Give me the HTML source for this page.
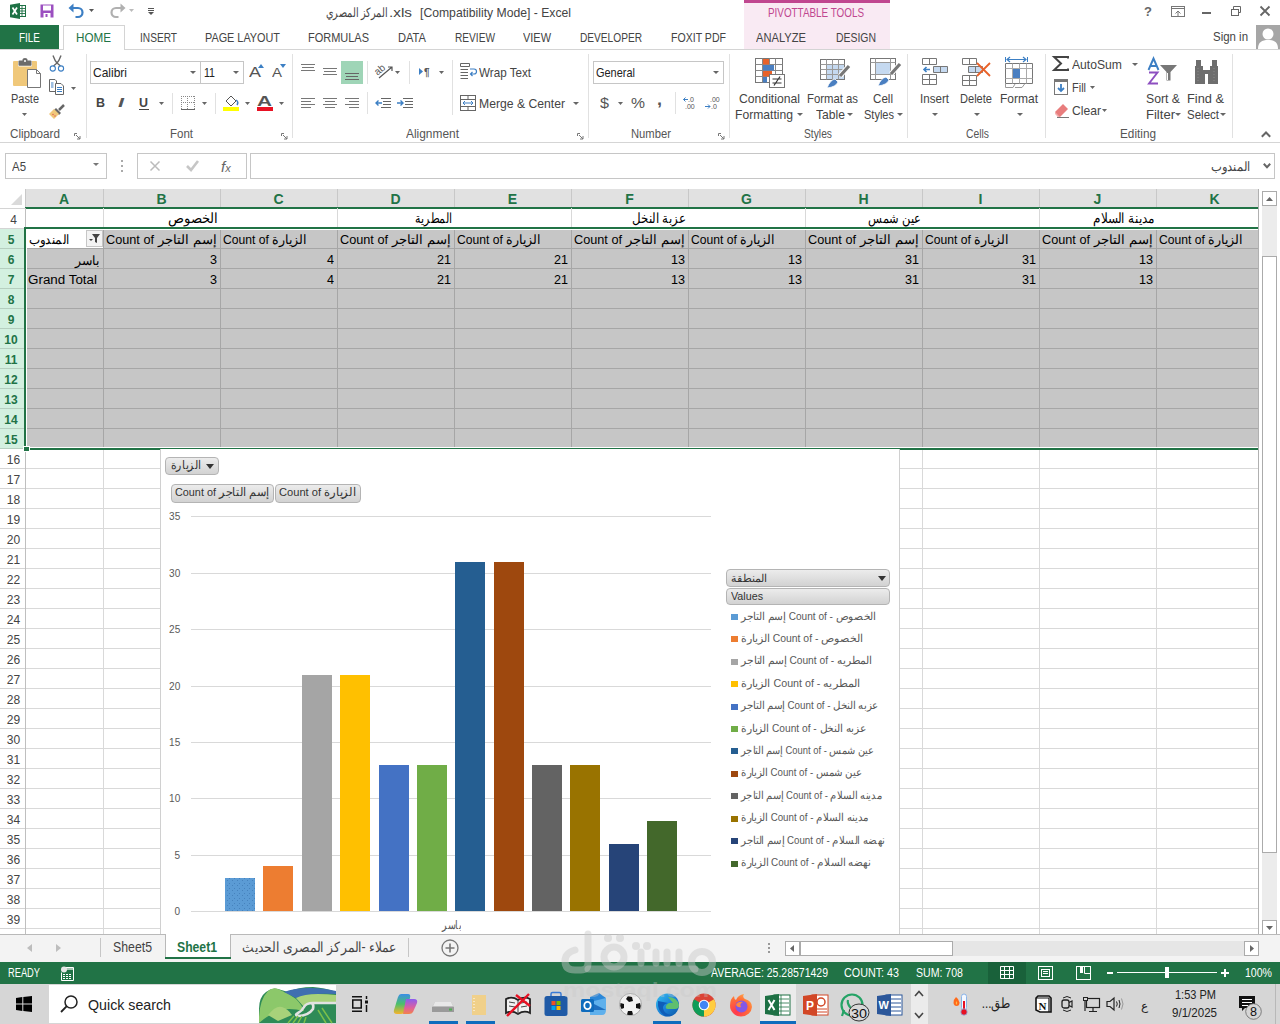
<!DOCTYPE html><html><head><meta charset="utf-8"><style>*{margin:0;padding:0;box-sizing:border-box}
html,body{width:1280px;height:1024px;overflow:hidden;background:#fff;font-family:"Liberation Sans",sans-serif;position:relative}
.t{position:absolute;white-space:nowrap;line-height:1}
svg{position:absolute;overflow:visible}
</style></head><body><div style="position:absolute;left:744px;top:0px;width:146px;height:49px;background:#f9eaf3"></div>
<div style="position:absolute;left:744px;top:0px;width:146px;height:3px;background:#c0468f"></div>
<div class="t" style="left:768px;transform-origin:left top;top:6.84px;font-size:12px;color:#c0468f;transform:scaleX(0.8225);">PIVOTTABLE TOOLS</div>
<div class="t" style="left:326px;transform-origin:left top;top:6.00px;font-size:13px;color:#444;transform:scaleX(0.7414);">المركز المصري</div>
<div class="t" style="left:389px;transform-origin:left top;top:6.00px;font-size:13px;color:#444;transform:scaleX(1.1795);">.xls</div>
<div class="t" style="left:420px;transform-origin:left top;top:6.00px;font-size:13px;color:#444;transform:scaleX(0.9372);">[Compatibility Mode] - Excel</div>
<svg style="left:10px;top:3px" width="17" height="17" viewBox="0 0 17 17"><rect x="8.5" y="2.5" width="7" height="11" fill="#fff" stroke="#1e7145"/><path d="M9 5.5H15M9 8H15M9 10.5H15M12 3V13" stroke="#1e7145" stroke-width="0.9"/><path d="M0 1.8L10 0V16L0 14.2Z" fill="#1e7145"/><path d="M2.5 4.5L7 11.5M7 4.5L2.5 11.5" stroke="#fff" stroke-width="1.7"/></svg>
<svg style="left:40px;top:4px" width="14" height="14" viewBox="0 0 14 14"><rect x="0.5" y="0.5" width="13" height="13" fill="#9b4fc0"/><rect x="3" y="1.5" width="8" height="5" fill="#fff"/><rect x="3.5" y="9" width="7" height="5" fill="#fff"/><rect x="5.5" y="10" width="2" height="3" fill="#9b4fc0"/></svg>
<svg style="left:68px;top:2px" width="18" height="17" viewBox="0 0 18 17"><path d="M3.5 6H10A4.5 4.5 0 0 1 10 15H7.5" fill="none" stroke="#3c7fc4" stroke-width="2.2"/><path d="M0.5 6L5.5 1.5V10.5Z" fill="#3c7fc4"/></svg>
<svg style="left:89px;top:9px" width="5" height="3" viewBox="0 0 5 3"><path d="M0 0H5L2.5 3Z" fill="#555"/></svg>
<svg style="left:108px;top:2px" width="18" height="17" viewBox="0 0 18 17"><path d="M14.5 6H8A4.5 4.5 0 0 0 8 15H10.5" fill="none" stroke="#b0b0b0" stroke-width="2.2"/><path d="M17.5 6L12.5 1.5V10.5Z" fill="#b0b0b0"/></svg>
<svg style="left:129px;top:9px" width="5" height="3" viewBox="0 0 5 3"><path d="M0 0H5L2.5 3Z" fill="#bbb"/></svg>
<svg style="left:148px;top:8px" width="6" height="7" viewBox="0 0 6 7"><path d="M0 0.5H6M0 2.5H6" stroke="#555" stroke-width="1"/><path d="M0 4H6L3 7Z" fill="#555"/></svg>
<div class="t" style="left:1144px;transform-origin:left top;top:5.00px;font-size:13px;color:#666;font-weight:bold">?</div>
<svg style="left:1171px;top:6px" width="14" height="11" viewBox="0 0 14 11"><rect x="0.5" y="0.5" width="13" height="10" fill="none" stroke="#777"/><path d="M0.5 2.5H13.5" stroke="#777"/><path d="M7 10V5M4.5 7.5L7 5L9.5 7.5" fill="none" stroke="#777"/></svg>
<div style="position:absolute;left:1202px;top:12px;width:9px;height:2px;background:#666"></div>
<svg style="left:1231px;top:6px" width="10" height="10" viewBox="0 0 10 10"><rect x="0.5" y="3.5" width="7" height="6" fill="none" stroke="#666"/><path d="M2.5 3.5V0.5H9.5V6.5H7.5" fill="none" stroke="#666"/></svg>
<svg style="left:1260px;top:6px" width="10" height="10" viewBox="0 0 10 10"><path d="M0.5 0.5L9.5 9.5M9.5 0.5L0.5 9.5" stroke="#666" stroke-width="1.8"/></svg>
<div style="position:absolute;left:0px;top:25px;width:59px;height:25px;background:#217346"></div>
<div class="t" style="left:19px;transform-origin:left top;top:31.00px;font-size:13px;color:#fff;transform:scaleX(0.7645);">FILE</div>
<div style="position:absolute;left:0px;top:49px;width:1280px;height:1px;background:#d4d4d4"></div>
<div style="position:absolute;left:63px;top:25px;width:62px;height:25px;background:#fff;border:1px solid #d4d4d4;border-bottom:none"></div>
<div class="t" style="left:76px;transform-origin:left top;top:31.00px;font-size:13px;color:#217346;transform:scaleX(0.8974);">HOME</div>
<div class="t" style="left:140px;transform-origin:left top;top:31.00px;font-size:13px;color:#444;transform:scaleX(0.7800);">INSERT</div>
<div class="t" style="left:205px;transform-origin:left top;top:31.00px;font-size:13px;color:#444;transform:scaleX(0.8349);">PAGE LAYOUT</div>
<div class="t" style="left:308px;transform-origin:left top;top:31.00px;font-size:13px;color:#444;transform:scaleX(0.8445);">FORMULAS</div>
<div class="t" style="left:398px;transform-origin:left top;top:31.00px;font-size:13px;color:#444;transform:scaleX(0.8550);">DATA</div>
<div class="t" style="left:455px;transform-origin:left top;top:31.00px;font-size:13px;color:#444;transform:scaleX(0.7798);">REVIEW</div>
<div class="t" style="left:523px;transform-origin:left top;top:31.00px;font-size:13px;color:#444;transform:scaleX(0.8425);">VIEW</div>
<div class="t" style="left:580px;transform-origin:left top;top:31.00px;font-size:13px;color:#444;transform:scaleX(0.7800);">DEVELOPER</div>
<div class="t" style="left:671px;transform-origin:left top;top:31.00px;font-size:13px;color:#444;transform:scaleX(0.8129);">FOXIT PDF</div>
<div class="t" style="left:756px;transform-origin:left top;top:31.00px;font-size:13px;color:#444;transform:scaleX(0.8579);">ANALYZE</div>
<div class="t" style="left:836px;transform-origin:left top;top:31.00px;font-size:13px;color:#444;transform:scaleX(0.8025);">DESIGN</div>
<div class="t" style="left:1213px;transform-origin:left top;top:30.00px;font-size:13px;color:#444;transform:scaleX(0.8805);">Sign in</div>
<svg style="left:1256px;top:25px" width="24" height="24" viewBox="0 0 24 24"><rect width="24" height="24" fill="#a6a6a6"/><circle cx="12" cy="9" r="5.5" fill="#fff"/><path d="M2 24C2 17 6 15 12 15S22 17 22 24Z" fill="#fff"/></svg>
<div style="position:absolute;left:0px;top:142px;width:1280px;height:1px;background:#d5d5d5"></div>
<div style="position:absolute;left:86px;top:54px;width:1px;height:84px;background:#e1e1e1"></div>
<div style="position:absolute;left:292px;top:54px;width:1px;height:84px;background:#e1e1e1"></div>
<div style="position:absolute;left:588px;top:54px;width:1px;height:84px;background:#e1e1e1"></div>
<div style="position:absolute;left:729px;top:54px;width:1px;height:84px;background:#e1e1e1"></div>
<div style="position:absolute;left:907px;top:54px;width:1px;height:84px;background:#e1e1e1"></div>
<div style="position:absolute;left:1045px;top:54px;width:1px;height:84px;background:#e1e1e1"></div>
<div style="position:absolute;left:1232px;top:54px;width:1px;height:84px;background:#e1e1e1"></div>
<div class="t" style="left:10px;transform-origin:left top;top:127.84px;font-size:12px;color:#555;transform:scaleX(0.9732);">Clipboard</div>
<div class="t" style="left:170px;transform-origin:left top;top:127.84px;font-size:12px;color:#555;transform:scaleX(0.9577);">Font</div>
<div class="t" style="left:406px;transform-origin:left top;top:127.84px;font-size:12px;color:#555;transform:scaleX(0.9930);">Alignment</div>
<div class="t" style="left:631px;transform-origin:left top;top:127.84px;font-size:12px;color:#555;transform:scaleX(0.9370);">Number</div>
<div class="t" style="left:804px;transform-origin:left top;top:127.84px;font-size:12px;color:#555;transform:scaleX(0.8566);">Styles</div>
<div class="t" style="left:966px;transform-origin:left top;top:127.84px;font-size:12px;color:#555;transform:scaleX(0.8623);">Cells</div>
<div class="t" style="left:1120px;transform-origin:left top;top:127.84px;font-size:12px;color:#555;transform:scaleX(0.9808);">Editing</div>
<svg style="left:74px;top:133px" width="7" height="7" viewBox="0 0 7 7"><path d="M0.5 0.5H6.5V6.5H0.5Z" fill="none" stroke="#999" stroke-width="0"/><path d="M0.5 0.5V3M0.5 0.5H3M2 2L6 6M6 3V6H3" fill="none" stroke="#777"/></svg>
<svg style="left:281px;top:133px" width="7" height="7" viewBox="0 0 7 7"><path d="M0.5 0.5H6.5V6.5H0.5Z" fill="none" stroke="#999" stroke-width="0"/><path d="M0.5 0.5V3M0.5 0.5H3M2 2L6 6M6 3V6H3" fill="none" stroke="#777"/></svg>
<svg style="left:577px;top:133px" width="7" height="7" viewBox="0 0 7 7"><path d="M0.5 0.5H6.5V6.5H0.5Z" fill="none" stroke="#999" stroke-width="0"/><path d="M0.5 0.5V3M0.5 0.5H3M2 2L6 6M6 3V6H3" fill="none" stroke="#777"/></svg>
<svg style="left:718px;top:133px" width="7" height="7" viewBox="0 0 7 7"><path d="M0.5 0.5H6.5V6.5H0.5Z" fill="none" stroke="#999" stroke-width="0"/><path d="M0.5 0.5V3M0.5 0.5H3M2 2L6 6M6 3V6H3" fill="none" stroke="#777"/></svg>
<svg style="left:12px;top:56px" width="30" height="33" viewBox="0 0 30 33"><rect x="1" y="5" width="24" height="25" rx="1" fill="#f0c87a"/><path d="M6.5 5.5H19.5V10H6.5Z" fill="#6b6b6b" stroke="#fff" stroke-width="1"/><path d="M6.5 9.5H19.5V5.5Q19.5 4.5 18.5 4.5H15.5V3.5Q15.5 2 13 2Q10.5 2 10.5 3.5V4.5H7.5Q6.5 4.5 6.5 5.5Z" fill="#6b6b6b"/><circle cx="13" cy="5" r="1" fill="#fff"/><path d="M15.5 13.5H24.5L28.5 17.5V31.5H15.5Z" fill="#fff" stroke="#777"/><path d="M24.5 13.5V17.5H28.5" fill="none" stroke="#777"/></svg>
<div class="t" style="left:11px;transform-origin:left top;top:92.84px;font-size:12px;color:#444;transform:scaleX(0.9124);">Paste</div>
<svg style="left:22px;top:113px" width="5" height="3" viewBox="0 0 5 3"><path d="M0 0H5L2.5 3Z" fill="#666"/></svg>
<svg style="left:49px;top:55px" width="16" height="17" viewBox="0 0 16 17"><path d="M4 0.5Q6 6 8 8Q10 6 12 0.5M8 8L4.5 11M8 8L11.5 11" fill="none" stroke="#666" stroke-width="1.4"/><circle cx="3.8" cy="13.5" r="2.6" fill="none" stroke="#3c7fc4" stroke-width="1.1"/><circle cx="12" cy="13.5" r="2.6" fill="none" stroke="#3c7fc4" stroke-width="1.1"/></svg>
<svg style="left:48px;top:79px" width="16" height="16" viewBox="0 0 16 16"><path d="M1.5 0.5H7L8.5 2V12.5H1.5Z" fill="#fff" stroke="#666"/><path d="M3 4H5.5M3 6H5.5M3 8H5.5" stroke="#3c7fc4"/><path d="M7.5 4.5H13L15.5 7V15.5H7.5Z" fill="#fff" stroke="#666"/><path d="M9 8.5H14M9 10.5H14M9 12.5H14" stroke="#3c7fc4"/></svg>
<svg style="left:71px;top:87px" width="5" height="3" viewBox="0 0 5 3"><path d="M0 0H5L2.5 3Z" fill="#666"/></svg>
<svg style="left:49px;top:102px" width="17" height="18" viewBox="0 0 17 18"><path d="M10 8L15 3" stroke="#666" stroke-width="2.5"/><path d="M7 6L12 11L10 13L5 8Z" fill="#666"/><path d="M0 12L5 7L10 12L5 17Z" fill="#f0c87a"/><circle cx="4" cy="12.5" r="0.7" fill="#e05050"/><circle cx="6" cy="14" r="0.7" fill="#e05050"/></svg>
<div style="position:absolute;left:90px;top:61px;width:111px;height:23px;border:1px solid #c6c6c6;background:#fff"></div>
<div style="position:absolute;left:201px;top:61px;width:43px;height:23px;border:1px solid #c6c6c6;border-left:none;background:#fff"></div>
<div class="t" style="left:93px;transform-origin:left top;top:66.00px;font-size:13px;color:#222;transform:scaleX(0.9228);">Calibri</div>
<svg style="left:190px;top:71px" width="6" height="3" viewBox="0 0 6 3"><path d="M0 0H6L3.0 3Z" fill="#666"/></svg>
<svg style="left:233px;top:71px" width="6" height="3" viewBox="0 0 6 3"><path d="M0 0H6L3.0 3Z" fill="#666"/></svg>
<div class="t" style="left:204px;transform-origin:left top;top:66.00px;font-size:13px;color:#222;transform:scaleX(0.8148);">11</div>
<div class="t" style="left:249px;transform-origin:left top;top:64.30px;font-size:15px;color:#555;transform:scaleX(1.1981);">A</div>
<svg style="left:258px;top:64px" width="6" height="4" viewBox="0 0 6 4"><path d="M0 4L3 0L6 4Z" fill="#3c7fc4"/></svg>
<div class="t" style="left:272px;transform-origin:left top;top:66.84px;font-size:12px;color:#555;transform:scaleX(1.2476);">A</div>
<svg style="left:280px;top:64px" width="6" height="4" viewBox="0 0 6 4"><path d="M0 0L3 4L6 0Z" fill="#3c7fc4"/></svg>
<div class="t" style="left:96px;transform-origin:left top;top:96.84px;font-size:12px;color:#444;transform:scaleX(1.0378);font-weight:bold">B</div>
<div class="t" style="left:118px;transform-origin:left top;top:96.00px;font-size:13px;color:#555;transform:scaleX(1.6552);font-style:italic;font-weight:bold">I</div>
<div class="t" style="left:139px;transform-origin:left top;top:96.84px;font-size:12px;color:#444;transform:scaleX(1.0378);font-weight:bold">U</div>
<div style="position:absolute;left:139px;top:109px;width:10px;height:1px;background:#444"></div>
<svg style="left:159px;top:102px" width="5" height="3" viewBox="0 0 5 3"><path d="M0 0H5L2.5 3Z" fill="#666"/></svg>
<div style="position:absolute;left:172px;top:93px;width:1px;height:21px;background:#e1e1e1"></div>
<svg style="left:181px;top:96px" width="14" height="14" viewBox="0 0 14 14"><path d="M0.5 0V13M13.5 0V13M0 0.5H14M6.5 0V13M0 6.5H14" stroke="#888" stroke-dasharray="1 1"/><path d="M0 13.5H14" stroke="#666"/></svg>
<svg style="left:202px;top:102px" width="5" height="3" viewBox="0 0 5 3"><path d="M0 0H5L2.5 3Z" fill="#666"/></svg>
<div style="position:absolute;left:215px;top:93px;width:1px;height:21px;background:#e1e1e1"></div>
<svg style="left:223px;top:95px" width="17" height="17" viewBox="0 0 17 17"><path d="M3 6L8 1L13 6L8 11Z" fill="#fff" stroke="#555"/><path d="M13 5Q16 7 14 10" fill="none" stroke="#3c7fc4" stroke-width="1.5"/><rect x="0" y="12" width="16" height="4" fill="#ffff00"/></svg>
<svg style="left:245px;top:102px" width="5" height="3" viewBox="0 0 5 3"><path d="M0 0H5L2.5 3Z" fill="#666"/></svg>
<div class="t" style="left:257px;transform-origin:left top;top:93.30px;font-size:15px;color:#555;transform:scaleX(1.3833);font-weight:bold">A</div>
<div style="position:absolute;left:257px;top:107px;width:16px;height:4px;background:#e81123"></div>
<svg style="left:279px;top:102px" width="5" height="3" viewBox="0 0 5 3"><path d="M0 0H5L2.5 3Z" fill="#666"/></svg>
<div style="position:absolute;left:301px;top:64px;width:14px;height:1px;background:#777"></div>
<div style="position:absolute;left:302px;top:67px;width:12px;height:1px;background:#777"></div>
<div style="position:absolute;left:301px;top:70px;width:14px;height:1px;background:#777"></div>
<div style="position:absolute;left:323px;top:68px;width:14px;height:1px;background:#777"></div>
<div style="position:absolute;left:324px;top:71px;width:12px;height:1px;background:#777"></div>
<div style="position:absolute;left:323px;top:74px;width:14px;height:1px;background:#777"></div>
<div style="position:absolute;left:341px;top:61px;width:22px;height:23px;background:#9fd5b7"></div>
<div style="position:absolute;left:345px;top:73px;width:14px;height:1px;background:#666"></div>
<div style="position:absolute;left:346px;top:76px;width:12px;height:1px;background:#666"></div>
<div style="position:absolute;left:345px;top:79px;width:14px;height:1px;background:#666"></div>
<div style="position:absolute;left:367px;top:61px;width:1px;height:23px;background:#e1e1e1"></div>
<svg style="left:375px;top:63px" width="26" height="17" viewBox="0 0 26 17"><text x="0" y="10" font-size="10" fill="#555" transform="rotate(-40 5 8)" font-family="Liberation Sans">ab</text><path d="M4 15L17 4M13 4H17V8" fill="none" stroke="#555" stroke-width="1.2"/></svg>
<svg style="left:395px;top:71px" width="5" height="3" viewBox="0 0 5 3"><path d="M0 0H5L2.5 3Z" fill="#666"/></svg>
<div style="position:absolute;left:409px;top:61px;width:1px;height:23px;background:#e1e1e1"></div>
<svg style="left:419px;top:67px" width="14" height="9" viewBox="0 0 14 9"><path d="M0 1L4 4.5L0 8Z" fill="#3c7fc4"/><text x="5" y="8.5" font-size="10" fill="#555" font-family="Liberation Sans" font-weight="bold">¶</text></svg>
<svg style="left:439px;top:71px" width="5" height="3" viewBox="0 0 5 3"><path d="M0 0H5L2.5 3Z" fill="#666"/></svg>
<div style="position:absolute;left:301px;top:98px;width:14px;height:1px;background:#777"></div>
<div style="position:absolute;left:301px;top:101px;width:10px;height:1px;background:#777"></div>
<div style="position:absolute;left:301px;top:104px;width:14px;height:1px;background:#777"></div>
<div style="position:absolute;left:301px;top:107px;width:10px;height:1px;background:#777"></div>
<div style="position:absolute;left:323px;top:98px;width:14px;height:1px;background:#777"></div>
<div style="position:absolute;left:325px;top:101px;width:10px;height:1px;background:#777"></div>
<div style="position:absolute;left:323px;top:104px;width:14px;height:1px;background:#777"></div>
<div style="position:absolute;left:325px;top:107px;width:10px;height:1px;background:#777"></div>
<div style="position:absolute;left:345px;top:98px;width:14px;height:1px;background:#777"></div>
<div style="position:absolute;left:349px;top:101px;width:10px;height:1px;background:#777"></div>
<div style="position:absolute;left:345px;top:104px;width:14px;height:1px;background:#777"></div>
<div style="position:absolute;left:349px;top:107px;width:10px;height:1px;background:#777"></div>
<div style="position:absolute;left:367px;top:92px;width:1px;height:22px;background:#e1e1e1"></div>
<svg style="left:375px;top:98px" width="17" height="11" viewBox="0 0 17 11"><path d="M6 0.5H16M8 3.5H16M8 6.5H16M6 9.5H16" stroke="#666"/><path d="M1 5H7M3.5 2.5L1 5L3.5 7.5" fill="none" stroke="#3c7fc4" stroke-width="1.4"/></svg>
<svg style="left:397px;top:98px" width="17" height="11" viewBox="0 0 17 11"><path d="M6 0.5H16M8 3.5H16M8 6.5H16M6 9.5H16" stroke="#666"/><path d="M0 5H6M3.5 2.5L6 5L3.5 7.5" fill="none" stroke="#3c7fc4" stroke-width="1.4"/></svg>
<div style="position:absolute;left:452px;top:60px;width:1px;height:55px;background:#e1e1e1"></div>
<svg style="left:460px;top:63px" width="17" height="16" viewBox="0 0 17 16"><path d="M0.5 0.5H9.5V3.5H0.5Z" fill="none" stroke="#666"/><path d="M0.5 6.5H8M0.5 9.5H8M0.5 12.5H8" stroke="#666"/><path d="M0.5 15.5H8" stroke="#666"/><path d="M10 6H14A2.5 2.5 0 0 1 14 11H11M12.5 9L10.5 11L12.5 13" fill="none" stroke="#3c7fc4" stroke-width="1.2"/></svg>
<div class="t" style="left:479px;transform-origin:left top;top:66.00px;font-size:13px;color:#444;transform:scaleX(0.8958);">Wrap Text</div>
<svg style="left:460px;top:95px" width="16" height="16" viewBox="0 0 16 16"><rect x="0.5" y="0.5" width="15" height="15" fill="#fff" stroke="#666"/><path d="M0.5 4.5H15.5M0.5 11.5H15.5M8 0.5V4.5M8 11.5V15.5" stroke="#666"/><path d="M3 8H13M5 6L3 8L5 10M11 6L13 8L11 10" fill="none" stroke="#3c7fc4"/></svg>
<div class="t" style="left:479px;transform-origin:left top;top:97.00px;font-size:13px;color:#444;transform:scaleX(0.9372);">Merge &amp; Center</div>
<svg style="left:573px;top:102px" width="6" height="3" viewBox="0 0 6 3"><path d="M0 0H6L3.0 3Z" fill="#666"/></svg>
<div style="position:absolute;left:593px;top:61px;width:131px;height:23px;border:1px solid #c6c6c6;background:#fff"></div>
<div class="t" style="left:596px;transform-origin:left top;top:66.00px;font-size:13px;color:#222;transform:scaleX(0.8432);">General</div>
<svg style="left:713px;top:71px" width="6" height="3" viewBox="0 0 6 3"><path d="M0 0H6L3.0 3Z" fill="#666"/></svg>
<div class="t" style="left:600px;transform-origin:left top;top:95.30px;font-size:15px;color:#555;transform:scaleX(1.0787);">$</div>
<svg style="left:618px;top:102px" width="5" height="3" viewBox="0 0 5 3"><path d="M0 0H5L2.5 3Z" fill="#666"/></svg>
<div class="t" style="left:631px;transform-origin:left top;top:95.30px;font-size:15px;color:#555;transform:scaleX(1.0492);">%</div>
<div class="t" style="left:657px;transform-origin:left top;top:92.46px;font-size:16px;color:#555;transform:scaleX(1.1228);font-weight:bold">,</div>
<div style="position:absolute;left:675px;top:92px;width:1px;height:22px;background:#e1e1e1"></div>
<svg style="left:683px;top:96px" width="15" height="13" viewBox="0 0 15 13"><text x="5" y="6" font-size="7" fill="#555" font-family="Liberation Sans">.0</text><text x="2" y="13" font-size="7" fill="#555" font-family="Liberation Sans">.00</text><path d="M0.5 3.5H5M2.5 1.5L0.5 3.5L2.5 5.5" fill="none" stroke="#3c7fc4"/></svg>
<svg style="left:705px;top:96px" width="15" height="13" viewBox="0 0 15 13"><text x="5" y="6" font-size="7" fill="#555" font-family="Liberation Sans">.00</text><text x="6" y="13" font-size="7" fill="#555" font-family="Liberation Sans">.0</text><path d="M0 10.5H5M3 8.5L5 10.5L3 12.5" fill="none" stroke="#3c7fc4"/></svg>
<svg style="left:755px;top:57px" width="31" height="32" viewBox="0 0 31 32"><rect x="0.5" y="1.5" width="27" height="24" fill="#fff" stroke="#777"/><path d="M0.5 7.5H27.5M0.5 13.5H27.5M0.5 19.5H27.5M7.5 1.5V25.5M20.5 1.5V25.5M14.5 1.5V7.5M14.5 13.5V19.5" stroke="#888"/><rect x="8" y="2" width="6" height="5.5" fill="#e8622a"/><rect x="8" y="8" width="11" height="5.5" fill="#4a7fc1"/><rect x="8" y="14" width="9" height="5.5" fill="#e8622a"/><rect x="8" y="20" width="4" height="5.5" fill="#4a7fc1"/><rect x="14.5" y="17.5" width="15" height="13" fill="#fff" stroke="#777"/><path d="M17.5 22H26.5M17.5 26H26.5M25 19.5L19 28.5" stroke="#333" stroke-width="1.2"/></svg>
<div class="t" style="left:739px;transform-origin:left top;top:92.00px;font-size:13px;color:#444;transform:scaleX(0.9378);">Conditional</div>
<div class="t" style="left:735px;transform-origin:left top;top:108.00px;font-size:13px;color:#444;transform:scaleX(0.9334);">Formatting</div>
<svg style="left:797px;top:113px" width="6" height="3" viewBox="0 0 6 3"><path d="M0 0H6L3.0 3Z" fill="#666"/></svg>
<svg style="left:820px;top:59px" width="30" height="30" viewBox="0 0 30 30"><rect x="0.5" y="0.5" width="24" height="20" fill="#fff" stroke="#777"/><rect x="6" y="5" width="18" height="15" fill="#c5d9f0"/><path d="M0.5 5.5H24.5M0.5 10.5H24.5M0.5 15.5H24.5M6.5 0.5V20.5M12.5 0.5V20.5M18.5 0.5V20.5" stroke="#999"/><path d="M29 7L20 17" stroke="#fff" stroke-width="5"/><path d="M29 7L20 17" stroke="#777" stroke-width="3.2"/><path d="M7 29Q10 21 15 20L18 23Q16 28 7 29Z" fill="#4a7fc1" stroke="#fff" stroke-width="0.8"/></svg>
<div class="t" style="left:807px;transform-origin:left top;top:92.00px;font-size:13px;color:#444;transform:scaleX(0.8716);">Format as</div>
<div class="t" style="left:816px;transform-origin:left top;top:108.00px;font-size:13px;color:#444;transform:scaleX(0.9331);">Table</div>
<svg style="left:847px;top:113px" width="6" height="3" viewBox="0 0 6 3"><path d="M0 0H6L3.0 3Z" fill="#666"/></svg>
<svg style="left:870px;top:58px" width="31" height="31" viewBox="0 0 31 31"><rect x="0.5" y="0.5" width="25" height="21" fill="#fff" stroke="#777"/><rect x="6" y="5" width="14" height="11" fill="#c5d9f0"/><path d="M0.5 4.5H25.5M0.5 16.5H25.5M5.5 0.5V21.5M20.5 0.5V21.5" stroke="#999"/><path d="M30 6L21 16" stroke="#fff" stroke-width="5"/><path d="M30 6L21 16" stroke="#777" stroke-width="3.2"/><path d="M8 28Q11 20 16 19L19 22Q17 27 8 28Z" fill="#4a7fc1" stroke="#fff" stroke-width="0.8"/></svg>
<div class="t" style="left:873px;transform-origin:left top;top:92.00px;font-size:13px;color:#444;transform:scaleX(0.8926);">Cell</div>
<div class="t" style="left:864px;transform-origin:left top;top:108.00px;font-size:13px;color:#444;transform:scaleX(0.8473);">Styles</div>
<svg style="left:897px;top:113px" width="6" height="3" viewBox="0 0 6 3"><path d="M0 0H6L3.0 3Z" fill="#666"/></svg>
<svg style="left:922px;top:57px" width="27" height="30" viewBox="0 0 27 30"><path d="M0.5 1.5H14.5V7.5H0.5ZM7.5 1.5V7.5" fill="#fff" stroke="#777"/><path d="M11.5 9.5H25.5V15.5H11.5Z" fill="#c5d9f0" stroke="#777"/><path d="M18.5 9.5V15.5" stroke="#777"/><path d="M2 12.5H8M4.5 10L2 12.5L4.5 15" fill="none" stroke="#3c7fc4" stroke-width="1.6"/><path d="M0.5 17.5H14.5V27.5H0.5ZM0.5 22.5H14.5M7.5 17.5V27.5" fill="#fff" stroke="#777"/></svg>
<div class="t" style="left:920px;transform-origin:left top;top:92.00px;font-size:13px;color:#444;transform:scaleX(0.8919);">Insert</div>
<svg style="left:932px;top:113px" width="6" height="3" viewBox="0 0 6 3"><path d="M0 0H6L3.0 3Z" fill="#666"/></svg>
<svg style="left:962px;top:57px" width="32" height="30" viewBox="0 0 32 30"><path d="M0.5 1.5H14.5V7.5H0.5ZM7.5 1.5V7.5" fill="#fff" stroke="#777"/><path d="M6.5 9.5H20.5V15.5H6.5Z" fill="#c5d9f0" stroke="#777"/><path d="M13.5 9.5V15.5" stroke="#777"/><path d="M0.5 18.5H14.5V28.5H0.5ZM0.5 23.5H14.5M7.5 18.5V28.5" fill="#fff" stroke="#777"/><path d="M15 6L28 19M28 6L15 19" stroke="#e8622a" stroke-width="1.8"/></svg>
<div class="t" style="left:960px;transform-origin:left top;top:92.00px;font-size:13px;color:#444;transform:scaleX(0.8516);">Delete</div>
<svg style="left:974px;top:113px" width="6" height="3" viewBox="0 0 6 3"><path d="M0 0H6L3.0 3Z" fill="#666"/></svg>
<svg style="left:1005px;top:57px" width="29" height="32" viewBox="0 0 29 32"><path d="M0.5 0V5M22.5 0V5" stroke="#3c7fc4"/><path d="M2 2.5H21M5 0L2 2.5L5 5M18 0L21 2.5L18 5" fill="none" stroke="#3c7fc4" stroke-width="1.2"/><path d="M0.5 6.5H27.5V26.5H0.5Z" fill="#fff" stroke="#777"/><path d="M0.5 11.5H27.5M0.5 21.5H27.5M7.5 6.5V26.5M14.5 6.5V26.5M21.5 6.5V26.5" stroke="#aaa"/><rect x="8" y="12" width="7" height="9" fill="#4a7fc1"/><path d="M0.5 26.5V30.5H8L10 27M10 30.5H17L20 26.5" fill="none" stroke="#999"/></svg>
<div class="t" style="left:1000px;transform-origin:left top;top:92.00px;font-size:13px;color:#444;transform:scaleX(0.9230);">Format</div>
<svg style="left:1017px;top:113px" width="6" height="3" viewBox="0 0 6 3"><path d="M0 0H6L3.0 3Z" fill="#666"/></svg>
<svg style="left:1053px;top:56px" width="16" height="16" viewBox="0 0 16 16"><path d="M15 2.5V1H1.2L8 7.5L1.2 14H15V12.5" fill="none" stroke="#444" stroke-width="2" stroke-linejoin="miter"/></svg>
<div class="t" style="left:1072px;transform-origin:left top;top:58.00px;font-size:13px;color:#444;transform:scaleX(0.9349);">AutoSum</div>
<svg style="left:1132px;top:63px" width="6" height="3" viewBox="0 0 6 3"><path d="M0 0H6L3.0 3Z" fill="#666"/></svg>
<svg style="left:1054px;top:79px" width="15" height="16" viewBox="0 0 15 16"><rect x="0.5" y="0.5" width="13" height="15" fill="#fff" stroke="#777"/><rect x="0" y="0" width="14" height="3" fill="#777"/><path d="M7 5V12M4 9L7 12L10 9" fill="none" stroke="#3c7fc4" stroke-width="1.8"/></svg>
<div class="t" style="left:1072px;transform-origin:left top;top:81.00px;font-size:13px;color:#444;transform:scaleX(0.8429);">Fill</div>
<svg style="left:1090px;top:86px" width="5" height="3" viewBox="0 0 5 3"><path d="M0 0H5L2.5 3Z" fill="#666"/></svg>
<svg style="left:1054px;top:102px" width="16" height="16" viewBox="0 0 16 16"><path d="M1 10L9 2L14 7L6 15H4Z" fill="#e87d7d"/><path d="M1 10L4 13L6 15H4L1 12Z" fill="#f3b0b0"/><path d="M3 15.5H15" stroke="#777"/></svg>
<div class="t" style="left:1072px;transform-origin:left top;top:104.00px;font-size:13px;color:#444;transform:scaleX(0.9331);">Clear</div>
<svg style="left:1102px;top:109px" width="5" height="3" viewBox="0 0 5 3"><path d="M0 0H5L2.5 3Z" fill="#666"/></svg>
<svg style="left:1148px;top:58px" width="30" height="28" viewBox="0 0 30 28"><path d="M0.5 12L5.5 0.5L10.5 12M2.5 8H8.5" fill="none" stroke="#3c7fc4" stroke-width="1.9"/><path d="M1 14.5H9.5L1 25.5H10" fill="none" stroke="#8d4fc0" stroke-width="1.9"/><path d="M12 7H29L22.5 14V22.5H18.5V14Z" fill="#777"/><path d="M19.5 15V22" stroke="#fff" stroke-width="1"/></svg>
<div class="t" style="left:1146px;transform-origin:left top;top:92.00px;font-size:13px;color:#444;transform:scaleX(0.9412);">Sort &amp;</div>
<div class="t" style="left:1146px;transform-origin:left top;top:108.00px;font-size:13px;color:#444;transform:scaleX(1.0038);">Filter</div>
<svg style="left:1175px;top:113px" width="6" height="3" viewBox="0 0 6 3"><path d="M0 0H6L3.0 3Z" fill="#666"/></svg>
<svg style="left:1193px;top:60px" width="27" height="24" viewBox="0 0 27 24"><path d="M3 0H8V6H10V10H17V6H19V0H24V6H25V24H15V14H12V24H2V6H3Z" fill="#6e6e6e"/><path d="M5 8V22M21 8V22" stroke="#8a8a8a" stroke-width="1" stroke-dasharray="1 2"/></svg>
<div class="t" style="left:1187px;transform-origin:left top;top:92.00px;font-size:13px;color:#444;transform:scaleX(0.9846);">Find &amp;</div>
<div class="t" style="left:1187px;transform-origin:left top;top:108.00px;font-size:13px;color:#444;transform:scaleX(0.8854);">Select</div>
<svg style="left:1220px;top:113px" width="6" height="3" viewBox="0 0 6 3"><path d="M0 0H6L3.0 3Z" fill="#666"/></svg>
<svg style="left:1261px;top:131px" width="10" height="7" viewBox="0 0 10 7"><path d="M0.8 5.8L5 1.5L9.2 5.8" fill="none" stroke="#666" stroke-width="2"/></svg>
<div style="position:absolute;left:5px;top:153px;width:102px;height:26px;border:1px solid #c6c6c6;background:#fff"></div>
<div class="t" style="left:12px;transform-origin:left top;top:160.00px;font-size:13px;color:#444;transform:scaleX(0.8802);">A5</div>
<svg style="left:93px;top:163px" width="6" height="3" viewBox="0 0 6 3"><path d="M0 0H6L3.0 3Z" fill="#777"/></svg>
<div style="position:absolute;left:121px;top:160px;width:2px;height:2px;background:#aaa"></div>
<div style="position:absolute;left:121px;top:165px;width:2px;height:2px;background:#aaa"></div>
<div style="position:absolute;left:121px;top:170px;width:2px;height:2px;background:#aaa"></div>
<div style="position:absolute;left:137px;top:153px;width:110px;height:26px;border:1px solid #c6c6c6;background:#fff"></div>
<svg style="left:150px;top:161px" width="10" height="10" viewBox="0 0 10 10"><path d="M0.5 0.5L9.5 9.5M9.5 0.5L0.5 9.5" stroke="#bbb" stroke-width="1.5"/></svg>
<svg style="left:186px;top:160px" width="13" height="12" viewBox="0 0 13 12"><path d="M1 6L5 10L12 1" fill="none" stroke="#c6c6c6" stroke-width="2.6"/></svg>
<div class="t" style="left:221px;transform-origin:left top;top:159.30px;font-size:15px;color:#666;font-style:italic;font-family:"Liberation Serif",serif;font-weight:bold">f<span style="font-size:11px">x</span></div>
<div style="position:absolute;left:250px;top:153px;width:1025px;height:26px;border:1px solid #c6c6c6;background:#fff"></div>
<div class="t" style="right:29px;transform-origin:right top;top:160.00px;font-size:13px;color:#444;transform:scaleX(0.8889);">المندوب</div>
<svg style="left:1263px;top:163px" width="8" height="6" viewBox="0 0 8 6"><path d="M0.8 0.8L4 4.2L7.2 0.8" fill="none" stroke="#666" stroke-width="2"/></svg>
<div style="position:absolute;left:0px;top:189px;width:1258px;height:19px;background:#fff"></div>
<div style="position:absolute;left:26px;top:189px;width:1232px;height:18px;background:#e1e1e1"></div>
<svg style="left:11px;top:194px" width="11" height="11" viewBox="0 0 11 11"><path d="M11 0V11H0Z" fill="#dadada"/></svg>
<div class="t" style="left:54.0px;transform-origin:left top;top:191.65px;font-size:14px;color:#217346;font-weight:bold;width:20px;text-align:center">A</div>
<div style="position:absolute;left:103px;top:189px;width:1px;height:18px;background:#c8c8c8"></div>
<div class="t" style="left:151.5px;transform-origin:left top;top:191.65px;font-size:14px;color:#217346;font-weight:bold;width:20px;text-align:center">B</div>
<div style="position:absolute;left:220px;top:189px;width:1px;height:18px;background:#c8c8c8"></div>
<div class="t" style="left:268.5px;transform-origin:left top;top:191.65px;font-size:14px;color:#217346;font-weight:bold;width:20px;text-align:center">C</div>
<div style="position:absolute;left:337px;top:189px;width:1px;height:18px;background:#c8c8c8"></div>
<div class="t" style="left:385.5px;transform-origin:left top;top:191.65px;font-size:14px;color:#217346;font-weight:bold;width:20px;text-align:center">D</div>
<div style="position:absolute;left:454px;top:189px;width:1px;height:18px;background:#c8c8c8"></div>
<div class="t" style="left:502.5px;transform-origin:left top;top:191.65px;font-size:14px;color:#217346;font-weight:bold;width:20px;text-align:center">E</div>
<div style="position:absolute;left:571px;top:189px;width:1px;height:18px;background:#c8c8c8"></div>
<div class="t" style="left:619.5px;transform-origin:left top;top:191.65px;font-size:14px;color:#217346;font-weight:bold;width:20px;text-align:center">F</div>
<div style="position:absolute;left:688px;top:189px;width:1px;height:18px;background:#c8c8c8"></div>
<div class="t" style="left:736.5px;transform-origin:left top;top:191.65px;font-size:14px;color:#217346;font-weight:bold;width:20px;text-align:center">G</div>
<div style="position:absolute;left:805px;top:189px;width:1px;height:18px;background:#c8c8c8"></div>
<div class="t" style="left:853.5px;transform-origin:left top;top:191.65px;font-size:14px;color:#217346;font-weight:bold;width:20px;text-align:center">H</div>
<div style="position:absolute;left:922px;top:189px;width:1px;height:18px;background:#c8c8c8"></div>
<div class="t" style="left:970.5px;transform-origin:left top;top:191.65px;font-size:14px;color:#217346;font-weight:bold;width:20px;text-align:center">I</div>
<div style="position:absolute;left:1039px;top:189px;width:1px;height:18px;background:#c8c8c8"></div>
<div class="t" style="left:1087.5px;transform-origin:left top;top:191.65px;font-size:14px;color:#217346;font-weight:bold;width:20px;text-align:center">J</div>
<div style="position:absolute;left:1156px;top:189px;width:1px;height:18px;background:#c8c8c8"></div>
<div class="t" style="left:1204.5px;transform-origin:left top;top:191.65px;font-size:14px;color:#217346;font-weight:bold;width:20px;text-align:center">K</div>
<div style="position:absolute;left:25px;top:189px;width:1px;height:19px;background:#c8c8c8"></div>
<div style="position:absolute;left:0px;top:208px;width:1258px;height:726px;background:#fff"></div>
<div style="position:absolute;left:25px;top:207px;width:1233px;height:2px;background:#217346"></div>
<div style="position:absolute;left:0px;top:208px;width:25px;height:1px;background:#d4d4d4"></div>
<div style="position:absolute;left:0px;top:229px;width:25px;height:220px;background:#d3f0e0"></div>
<div style="position:absolute;left:25px;top:208px;width:1px;height:726px;background:#bfbfbf"></div>
<div style="position:absolute;left:0px;top:228px;width:25px;height:1px;background:#d4d4d4"></div>
<div class="t" style="left:1px;transform-origin:left top;top:214.14px;font-size:12px;color:#444;width:25px;text-align:center">4</div>
<div style="position:absolute;left:0px;top:248px;width:25px;height:1px;background:#b6cfc0"></div>
<div class="t" style="left:-1.5px;transform-origin:left top;top:234.14px;font-size:12px;color:#217346;font-weight:bold;width:25px;text-align:center">5</div>
<div style="position:absolute;left:0px;top:268px;width:25px;height:1px;background:#b6cfc0"></div>
<div class="t" style="left:-1.5px;transform-origin:left top;top:254.14px;font-size:12px;color:#217346;font-weight:bold;width:25px;text-align:center">6</div>
<div style="position:absolute;left:0px;top:288px;width:25px;height:1px;background:#b6cfc0"></div>
<div class="t" style="left:-1.5px;transform-origin:left top;top:274.14px;font-size:12px;color:#217346;font-weight:bold;width:25px;text-align:center">7</div>
<div style="position:absolute;left:0px;top:308px;width:25px;height:1px;background:#b6cfc0"></div>
<div class="t" style="left:-1.5px;transform-origin:left top;top:294.14px;font-size:12px;color:#217346;font-weight:bold;width:25px;text-align:center">8</div>
<div style="position:absolute;left:0px;top:328px;width:25px;height:1px;background:#b6cfc0"></div>
<div class="t" style="left:-1.5px;transform-origin:left top;top:314.14px;font-size:12px;color:#217346;font-weight:bold;width:25px;text-align:center">9</div>
<div style="position:absolute;left:0px;top:348px;width:25px;height:1px;background:#b6cfc0"></div>
<div class="t" style="left:-1.5px;transform-origin:left top;top:334.14px;font-size:12px;color:#217346;font-weight:bold;width:25px;text-align:center">10</div>
<div style="position:absolute;left:0px;top:368px;width:25px;height:1px;background:#b6cfc0"></div>
<div class="t" style="left:-1.5px;transform-origin:left top;top:354.14px;font-size:12px;color:#217346;font-weight:bold;width:25px;text-align:center">11</div>
<div style="position:absolute;left:0px;top:388px;width:25px;height:1px;background:#b6cfc0"></div>
<div class="t" style="left:-1.5px;transform-origin:left top;top:374.14px;font-size:12px;color:#217346;font-weight:bold;width:25px;text-align:center">12</div>
<div style="position:absolute;left:0px;top:408px;width:25px;height:1px;background:#b6cfc0"></div>
<div class="t" style="left:-1.5px;transform-origin:left top;top:394.14px;font-size:12px;color:#217346;font-weight:bold;width:25px;text-align:center">13</div>
<div style="position:absolute;left:0px;top:428px;width:25px;height:1px;background:#b6cfc0"></div>
<div class="t" style="left:-1.5px;transform-origin:left top;top:414.14px;font-size:12px;color:#217346;font-weight:bold;width:25px;text-align:center">14</div>
<div style="position:absolute;left:0px;top:448px;width:25px;height:1px;background:#b6cfc0"></div>
<div class="t" style="left:-1.5px;transform-origin:left top;top:434.14px;font-size:12px;color:#217346;font-weight:bold;width:25px;text-align:center">15</div>
<div style="position:absolute;left:0px;top:468px;width:25px;height:1px;background:#d4d4d4"></div>
<div class="t" style="left:1px;transform-origin:left top;top:454.14px;font-size:12px;color:#444;width:25px;text-align:center">16</div>
<div style="position:absolute;left:0px;top:488px;width:25px;height:1px;background:#d4d4d4"></div>
<div class="t" style="left:1px;transform-origin:left top;top:474.14px;font-size:12px;color:#444;width:25px;text-align:center">17</div>
<div style="position:absolute;left:0px;top:508px;width:25px;height:1px;background:#d4d4d4"></div>
<div class="t" style="left:1px;transform-origin:left top;top:494.14px;font-size:12px;color:#444;width:25px;text-align:center">18</div>
<div style="position:absolute;left:0px;top:528px;width:25px;height:1px;background:#d4d4d4"></div>
<div class="t" style="left:1px;transform-origin:left top;top:514.14px;font-size:12px;color:#444;width:25px;text-align:center">19</div>
<div style="position:absolute;left:0px;top:548px;width:25px;height:1px;background:#d4d4d4"></div>
<div class="t" style="left:1px;transform-origin:left top;top:534.14px;font-size:12px;color:#444;width:25px;text-align:center">20</div>
<div style="position:absolute;left:0px;top:568px;width:25px;height:1px;background:#d4d4d4"></div>
<div class="t" style="left:1px;transform-origin:left top;top:554.14px;font-size:12px;color:#444;width:25px;text-align:center">21</div>
<div style="position:absolute;left:0px;top:588px;width:25px;height:1px;background:#d4d4d4"></div>
<div class="t" style="left:1px;transform-origin:left top;top:574.14px;font-size:12px;color:#444;width:25px;text-align:center">22</div>
<div style="position:absolute;left:0px;top:608px;width:25px;height:1px;background:#d4d4d4"></div>
<div class="t" style="left:1px;transform-origin:left top;top:594.14px;font-size:12px;color:#444;width:25px;text-align:center">23</div>
<div style="position:absolute;left:0px;top:628px;width:25px;height:1px;background:#d4d4d4"></div>
<div class="t" style="left:1px;transform-origin:left top;top:614.14px;font-size:12px;color:#444;width:25px;text-align:center">24</div>
<div style="position:absolute;left:0px;top:648px;width:25px;height:1px;background:#d4d4d4"></div>
<div class="t" style="left:1px;transform-origin:left top;top:634.14px;font-size:12px;color:#444;width:25px;text-align:center">25</div>
<div style="position:absolute;left:0px;top:668px;width:25px;height:1px;background:#d4d4d4"></div>
<div class="t" style="left:1px;transform-origin:left top;top:654.14px;font-size:12px;color:#444;width:25px;text-align:center">26</div>
<div style="position:absolute;left:0px;top:688px;width:25px;height:1px;background:#d4d4d4"></div>
<div class="t" style="left:1px;transform-origin:left top;top:674.14px;font-size:12px;color:#444;width:25px;text-align:center">27</div>
<div style="position:absolute;left:0px;top:708px;width:25px;height:1px;background:#d4d4d4"></div>
<div class="t" style="left:1px;transform-origin:left top;top:694.14px;font-size:12px;color:#444;width:25px;text-align:center">28</div>
<div style="position:absolute;left:0px;top:728px;width:25px;height:1px;background:#d4d4d4"></div>
<div class="t" style="left:1px;transform-origin:left top;top:714.14px;font-size:12px;color:#444;width:25px;text-align:center">29</div>
<div style="position:absolute;left:0px;top:748px;width:25px;height:1px;background:#d4d4d4"></div>
<div class="t" style="left:1px;transform-origin:left top;top:734.14px;font-size:12px;color:#444;width:25px;text-align:center">30</div>
<div style="position:absolute;left:0px;top:768px;width:25px;height:1px;background:#d4d4d4"></div>
<div class="t" style="left:1px;transform-origin:left top;top:754.14px;font-size:12px;color:#444;width:25px;text-align:center">31</div>
<div style="position:absolute;left:0px;top:788px;width:25px;height:1px;background:#d4d4d4"></div>
<div class="t" style="left:1px;transform-origin:left top;top:774.14px;font-size:12px;color:#444;width:25px;text-align:center">32</div>
<div style="position:absolute;left:0px;top:808px;width:25px;height:1px;background:#d4d4d4"></div>
<div class="t" style="left:1px;transform-origin:left top;top:794.14px;font-size:12px;color:#444;width:25px;text-align:center">33</div>
<div style="position:absolute;left:0px;top:828px;width:25px;height:1px;background:#d4d4d4"></div>
<div class="t" style="left:1px;transform-origin:left top;top:814.14px;font-size:12px;color:#444;width:25px;text-align:center">34</div>
<div style="position:absolute;left:0px;top:848px;width:25px;height:1px;background:#d4d4d4"></div>
<div class="t" style="left:1px;transform-origin:left top;top:834.14px;font-size:12px;color:#444;width:25px;text-align:center">35</div>
<div style="position:absolute;left:0px;top:868px;width:25px;height:1px;background:#d4d4d4"></div>
<div class="t" style="left:1px;transform-origin:left top;top:854.14px;font-size:12px;color:#444;width:25px;text-align:center">36</div>
<div style="position:absolute;left:0px;top:888px;width:25px;height:1px;background:#d4d4d4"></div>
<div class="t" style="left:1px;transform-origin:left top;top:874.14px;font-size:12px;color:#444;width:25px;text-align:center">37</div>
<div style="position:absolute;left:0px;top:908px;width:25px;height:1px;background:#d4d4d4"></div>
<div class="t" style="left:1px;transform-origin:left top;top:894.14px;font-size:12px;color:#444;width:25px;text-align:center">38</div>
<div style="position:absolute;left:0px;top:928px;width:25px;height:1px;background:#d4d4d4"></div>
<div class="t" style="left:1px;transform-origin:left top;top:914.14px;font-size:12px;color:#444;width:25px;text-align:center">39</div>
<div style="position:absolute;left:0px;top:948px;width:25px;height:1px;background:#d4d4d4"></div>
<div style="position:absolute;left:26px;top:468px;width:1232px;height:1px;background:#d9d9d9"></div>
<div style="position:absolute;left:26px;top:488px;width:1232px;height:1px;background:#d9d9d9"></div>
<div style="position:absolute;left:26px;top:508px;width:1232px;height:1px;background:#d9d9d9"></div>
<div style="position:absolute;left:26px;top:528px;width:1232px;height:1px;background:#d9d9d9"></div>
<div style="position:absolute;left:26px;top:548px;width:1232px;height:1px;background:#d9d9d9"></div>
<div style="position:absolute;left:26px;top:568px;width:1232px;height:1px;background:#d9d9d9"></div>
<div style="position:absolute;left:26px;top:588px;width:1232px;height:1px;background:#d9d9d9"></div>
<div style="position:absolute;left:26px;top:608px;width:1232px;height:1px;background:#d9d9d9"></div>
<div style="position:absolute;left:26px;top:628px;width:1232px;height:1px;background:#d9d9d9"></div>
<div style="position:absolute;left:26px;top:648px;width:1232px;height:1px;background:#d9d9d9"></div>
<div style="position:absolute;left:26px;top:668px;width:1232px;height:1px;background:#d9d9d9"></div>
<div style="position:absolute;left:26px;top:688px;width:1232px;height:1px;background:#d9d9d9"></div>
<div style="position:absolute;left:26px;top:708px;width:1232px;height:1px;background:#d9d9d9"></div>
<div style="position:absolute;left:26px;top:728px;width:1232px;height:1px;background:#d9d9d9"></div>
<div style="position:absolute;left:26px;top:748px;width:1232px;height:1px;background:#d9d9d9"></div>
<div style="position:absolute;left:26px;top:768px;width:1232px;height:1px;background:#d9d9d9"></div>
<div style="position:absolute;left:26px;top:788px;width:1232px;height:1px;background:#d9d9d9"></div>
<div style="position:absolute;left:26px;top:808px;width:1232px;height:1px;background:#d9d9d9"></div>
<div style="position:absolute;left:26px;top:828px;width:1232px;height:1px;background:#d9d9d9"></div>
<div style="position:absolute;left:26px;top:848px;width:1232px;height:1px;background:#d9d9d9"></div>
<div style="position:absolute;left:26px;top:868px;width:1232px;height:1px;background:#d9d9d9"></div>
<div style="position:absolute;left:26px;top:888px;width:1232px;height:1px;background:#d9d9d9"></div>
<div style="position:absolute;left:26px;top:908px;width:1232px;height:1px;background:#d9d9d9"></div>
<div style="position:absolute;left:26px;top:928px;width:1232px;height:1px;background:#d9d9d9"></div>
<div style="position:absolute;left:26px;top:948px;width:1232px;height:1px;background:#d9d9d9"></div>
<div style="position:absolute;left:103px;top:449px;width:1px;height:485px;background:#d9d9d9"></div>
<div style="position:absolute;left:220px;top:449px;width:1px;height:485px;background:#d9d9d9"></div>
<div style="position:absolute;left:337px;top:449px;width:1px;height:485px;background:#d9d9d9"></div>
<div style="position:absolute;left:454px;top:449px;width:1px;height:485px;background:#d9d9d9"></div>
<div style="position:absolute;left:571px;top:449px;width:1px;height:485px;background:#d9d9d9"></div>
<div style="position:absolute;left:688px;top:449px;width:1px;height:485px;background:#d9d9d9"></div>
<div style="position:absolute;left:805px;top:449px;width:1px;height:485px;background:#d9d9d9"></div>
<div style="position:absolute;left:922px;top:449px;width:1px;height:485px;background:#d9d9d9"></div>
<div style="position:absolute;left:1039px;top:449px;width:1px;height:485px;background:#d9d9d9"></div>
<div style="position:absolute;left:1156px;top:449px;width:1px;height:485px;background:#d9d9d9"></div>
<div style="position:absolute;left:26px;top:228px;width:1232px;height:1px;background:#d9d9d9"></div>
<div style="position:absolute;left:103px;top:208px;width:1px;height:20px;background:#d9d9d9"></div>
<div style="position:absolute;left:337px;top:208px;width:1px;height:20px;background:#d9d9d9"></div>
<div style="position:absolute;left:571px;top:208px;width:1px;height:20px;background:#d9d9d9"></div>
<div style="position:absolute;left:805px;top:208px;width:1px;height:20px;background:#d9d9d9"></div>
<div style="position:absolute;left:1039px;top:208px;width:1px;height:20px;background:#d9d9d9"></div>
<div style="position:absolute;left:1258px;top:189px;width:1px;height:745px;background:#b0b0b0"></div>
<div class="t" style="right:1062px;transform-origin:right top;top:211.15px;font-size:14px;color:#000;transform:scaleX(0.9434);">الخصوص</div>
<div class="t" style="right:828px;transform-origin:right top;top:211.15px;font-size:14px;color:#000;transform:scaleX(0.7872);">المطرية</div>
<div class="t" style="right:594px;transform-origin:right top;top:211.15px;font-size:14px;color:#000;transform:scaleX(0.8452);">عزبة النخل</div>
<div class="t" style="right:359px;transform-origin:right top;top:211.15px;font-size:14px;color:#000;transform:scaleX(0.8168);">عين شمس</div>
<div class="t" style="right:125px;transform-origin:right top;top:211.15px;font-size:14px;color:#000;transform:scaleX(0.8624);">مدينة السلام</div>
<div style="position:absolute;left:26px;top:229px;width:1232px;height:219px;background:#fff"></div>
<div style="position:absolute;left:27px;top:230px;width:1231px;height:217px;background:#c6c6c6"></div>
<div style="position:absolute;left:27px;top:230px;width:76px;height:18px;background:#fff"></div>
<div style="position:absolute;left:27px;top:248px;width:1231px;height:1px;background:#a6a6a6"></div>
<div style="position:absolute;left:27px;top:268px;width:1231px;height:1px;background:#a6a6a6"></div>
<div style="position:absolute;left:27px;top:288px;width:1231px;height:1px;background:#a6a6a6"></div>
<div style="position:absolute;left:27px;top:308px;width:1231px;height:1px;background:#a6a6a6"></div>
<div style="position:absolute;left:27px;top:328px;width:1231px;height:1px;background:#a6a6a6"></div>
<div style="position:absolute;left:27px;top:348px;width:1231px;height:1px;background:#a6a6a6"></div>
<div style="position:absolute;left:27px;top:368px;width:1231px;height:1px;background:#a6a6a6"></div>
<div style="position:absolute;left:27px;top:388px;width:1231px;height:1px;background:#a6a6a6"></div>
<div style="position:absolute;left:27px;top:408px;width:1231px;height:1px;background:#a6a6a6"></div>
<div style="position:absolute;left:27px;top:428px;width:1231px;height:1px;background:#a6a6a6"></div>
<div style="position:absolute;left:103px;top:230px;width:1px;height:217px;background:#a6a6a6"></div>
<div style="position:absolute;left:220px;top:230px;width:1px;height:217px;background:#a6a6a6"></div>
<div style="position:absolute;left:337px;top:230px;width:1px;height:217px;background:#a6a6a6"></div>
<div style="position:absolute;left:454px;top:230px;width:1px;height:217px;background:#a6a6a6"></div>
<div style="position:absolute;left:571px;top:230px;width:1px;height:217px;background:#a6a6a6"></div>
<div style="position:absolute;left:688px;top:230px;width:1px;height:217px;background:#a6a6a6"></div>
<div style="position:absolute;left:805px;top:230px;width:1px;height:217px;background:#a6a6a6"></div>
<div style="position:absolute;left:922px;top:230px;width:1px;height:217px;background:#a6a6a6"></div>
<div style="position:absolute;left:1039px;top:230px;width:1px;height:217px;background:#a6a6a6"></div>
<div style="position:absolute;left:1156px;top:230px;width:1px;height:217px;background:#a6a6a6"></div>
<div style="position:absolute;left:24px;top:227px;width:1234px;height:2px;background:#217346"></div>
<div style="position:absolute;left:24px;top:227px;width:2px;height:223px;background:#217346"></div>
<div style="position:absolute;left:24px;top:448px;width:1234px;height:2px;background:#217346"></div>
<div style="position:absolute;left:23px;top:446px;width:7px;height:6px;background:#217346;border:1px solid #fff"></div>
<div class="t" style="left:29px;transform-origin:left top;top:233.00px;font-size:13px;color:#000;transform:scaleX(0.9111);">المندوب</div>
<div style="position:absolute;left:86px;top:230px;width:17px;height:17px;background:#f3f3f3;border:1px solid #c6c6c6"></div>
<svg style="left:88px;top:233px" width="13" height="11" viewBox="0 0 13 11"><path d="M4 1H12L9 5V10L7 9V5Z" fill="#444"/><path d="M1 6H5L3 8Z" fill="#444"/></svg>
<div class="t" style="left:106px;transform-origin:left top;top:234.22px;font-size:12.5px;color:#000;transform:scaleX(1.0163);">Count of إسم التاجر</div>
<div class="t" style="left:223px;transform-origin:left top;top:234.22px;font-size:12.5px;color:#000;transform:scaleX(0.9685);">Count of الزيارة</div>
<div class="t" style="left:340px;transform-origin:left top;top:234.22px;font-size:12.5px;color:#000;transform:scaleX(1.0163);">Count of إسم التاجر</div>
<div class="t" style="left:457px;transform-origin:left top;top:234.22px;font-size:12.5px;color:#000;transform:scaleX(0.9685);">Count of الزيارة</div>
<div class="t" style="left:574px;transform-origin:left top;top:234.22px;font-size:12.5px;color:#000;transform:scaleX(1.0163);">Count of إسم التاجر</div>
<div class="t" style="left:691px;transform-origin:left top;top:234.22px;font-size:12.5px;color:#000;transform:scaleX(0.9685);">Count of الزيارة</div>
<div class="t" style="left:808px;transform-origin:left top;top:234.22px;font-size:12.5px;color:#000;transform:scaleX(1.0163);">Count of إسم التاجر</div>
<div class="t" style="left:925px;transform-origin:left top;top:234.22px;font-size:12.5px;color:#000;transform:scaleX(0.9685);">Count of الزيارة</div>
<div class="t" style="left:1042px;transform-origin:left top;top:234.22px;font-size:12.5px;color:#000;transform:scaleX(1.0163);">Count of إسم التاجر</div>
<div class="t" style="left:1159px;transform-origin:left top;top:234.22px;font-size:12.5px;color:#000;transform:scaleX(0.9685);">Count of الزيارة</div>
<div class="t" style="right:1180px;transform-origin:right top;top:254.00px;font-size:13px;color:#000;transform:scaleX(0.9615);">باسر</div>
<div class="t" style="left:28px;transform-origin:left top;top:274.22px;font-size:12.5px;color:#000;transform:scaleX(1.0713);">Grand Total</div>
<div class="t" style="right:1063.2px;transform-origin:right top;top:254.42px;font-size:12.5px;color:#000;transform:scaleX(1.0067);">3</div>
<div class="t" style="right:1063.2px;transform-origin:right top;top:274.42px;font-size:12.5px;color:#000;transform:scaleX(1.0067);">3</div>
<div class="t" style="right:946.2px;transform-origin:right top;top:254.42px;font-size:12.5px;color:#000;transform:scaleX(1.0067);">4</div>
<div class="t" style="right:946.2px;transform-origin:right top;top:274.42px;font-size:12.5px;color:#000;transform:scaleX(1.0067);">4</div>
<div class="t" style="right:829.2px;transform-origin:right top;top:254.42px;font-size:12.5px;color:#000;transform:scaleX(1.0067);">21</div>
<div class="t" style="right:829.2px;transform-origin:right top;top:274.42px;font-size:12.5px;color:#000;transform:scaleX(1.0067);">21</div>
<div class="t" style="right:712.2px;transform-origin:right top;top:254.42px;font-size:12.5px;color:#000;transform:scaleX(1.0067);">21</div>
<div class="t" style="right:712.2px;transform-origin:right top;top:274.42px;font-size:12.5px;color:#000;transform:scaleX(1.0067);">21</div>
<div class="t" style="right:595.2px;transform-origin:right top;top:254.42px;font-size:12.5px;color:#000;transform:scaleX(1.0067);">13</div>
<div class="t" style="right:595.2px;transform-origin:right top;top:274.42px;font-size:12.5px;color:#000;transform:scaleX(1.0067);">13</div>
<div class="t" style="right:478.20000000000005px;transform-origin:right top;top:254.42px;font-size:12.5px;color:#000;transform:scaleX(1.0067);">13</div>
<div class="t" style="right:478.20000000000005px;transform-origin:right top;top:274.42px;font-size:12.5px;color:#000;transform:scaleX(1.0067);">13</div>
<div class="t" style="right:361.20000000000005px;transform-origin:right top;top:254.42px;font-size:12.5px;color:#000;transform:scaleX(1.0067);">31</div>
<div class="t" style="right:361.20000000000005px;transform-origin:right top;top:274.42px;font-size:12.5px;color:#000;transform:scaleX(1.0067);">31</div>
<div class="t" style="right:244.20000000000005px;transform-origin:right top;top:254.42px;font-size:12.5px;color:#000;transform:scaleX(1.0067);">31</div>
<div class="t" style="right:244.20000000000005px;transform-origin:right top;top:274.42px;font-size:12.5px;color:#000;transform:scaleX(1.0067);">31</div>
<div class="t" style="right:127.20000000000005px;transform-origin:right top;top:254.42px;font-size:12.5px;color:#000;transform:scaleX(1.0067);">13</div>
<div class="t" style="right:127.20000000000005px;transform-origin:right top;top:274.42px;font-size:12.5px;color:#000;transform:scaleX(1.0067);">13</div>
<div style="position:absolute;left:1259px;top:189px;width:21px;height:745px;background:#fff"></div>
<div style="position:absolute;left:1262px;top:206px;width:15px;height:728px;background:#ececec"></div>
<div style="position:absolute;left:1262px;top:191px;width:15px;height:15px;background:#fff;border:1px solid #ababab"></div>
<svg style="left:1266px;top:197px" width="7" height="4" viewBox="0 0 7 4"><path d="M0 4L3.5 0L7 4Z" fill="#666"/></svg>
<div style="position:absolute;left:1262px;top:256px;width:15px;height:597px;background:#fff;border:1px solid #ababab"></div>
<div style="position:absolute;left:1262px;top:920px;width:15px;height:15px;background:#fff;border:1px solid #ababab"></div>
<svg style="left:1266px;top:926px" width="7" height="4" viewBox="0 0 7 4"><path d="M0 0L3.5 4L7 0Z" fill="#666"/></svg>
<div style="position:absolute;left:160px;top:449px;width:740px;height:486px;background:#fff;border-left:1px solid #d0d0d0;border-right:1px solid #d0d0d0"></div>
<div style="position:absolute;left:165px;top:457px;width:54px;height:18px;border:1px solid #b4b4b4;border-radius:4px;background:linear-gradient(#ececec,#d2d2d2)"></div>
<div class="t" style="left:171px;transform-origin:left top;top:460.27px;font-size:11.5px;color:#333;transform:scaleX(0.9091);">الزيارة</div>
<svg style="left:206px;top:464px" width="8" height="5" viewBox="0 0 8 5"><path d="M0 0H8L4 5Z" fill="#333"/></svg>
<div style="position:absolute;left:171px;top:484px;width:103px;height:19px;border:1px solid #b4b4b4;border-radius:4px;background:linear-gradient(#ececec,#d2d2d2)"></div>
<div class="t" style="left:175px;transform-origin:left top;top:487.27px;font-size:11.5px;color:#333;transform:scaleX(0.9412);">Count of إسم التاجر</div>
<div style="position:absolute;left:275px;top:484px;width:86px;height:19px;border:1px solid #b4b4b4;border-radius:4px;background:linear-gradient(#ececec,#d2d2d2)"></div>
<div class="t" style="left:279px;transform-origin:left top;top:487.27px;font-size:11.5px;color:#333;transform:scaleX(0.9665);">Count of الزيارة</div>
<div style="position:absolute;left:191px;top:911px;width:520px;height:1px;background:#d9d9d9"></div>
<div class="t" style="right:1099.5px;transform-origin:right top;top:905.69px;font-size:11px;color:#595959;transform:scaleX(0.9143);">0</div>
<div style="position:absolute;left:191px;top:855px;width:520px;height:1px;background:#d9d9d9"></div>
<div class="t" style="right:1099.5px;transform-origin:right top;top:849.69px;font-size:11px;color:#595959;transform:scaleX(0.9143);">5</div>
<div style="position:absolute;left:191px;top:798px;width:520px;height:1px;background:#d9d9d9"></div>
<div class="t" style="right:1099.5px;transform-origin:right top;top:792.69px;font-size:11px;color:#595959;transform:scaleX(0.9143);">10</div>
<div style="position:absolute;left:191px;top:742px;width:520px;height:1px;background:#d9d9d9"></div>
<div class="t" style="right:1099.5px;transform-origin:right top;top:736.69px;font-size:11px;color:#595959;transform:scaleX(0.9143);">15</div>
<div style="position:absolute;left:191px;top:686px;width:520px;height:1px;background:#d9d9d9"></div>
<div class="t" style="right:1099.5px;transform-origin:right top;top:680.69px;font-size:11px;color:#595959;transform:scaleX(0.9143);">20</div>
<div style="position:absolute;left:191px;top:629px;width:520px;height:1px;background:#d9d9d9"></div>
<div class="t" style="right:1099.5px;transform-origin:right top;top:623.69px;font-size:11px;color:#595959;transform:scaleX(0.9143);">25</div>
<div style="position:absolute;left:191px;top:573px;width:520px;height:1px;background:#d9d9d9"></div>
<div class="t" style="right:1099.5px;transform-origin:right top;top:567.69px;font-size:11px;color:#595959;transform:scaleX(0.9143);">30</div>
<div style="position:absolute;left:191px;top:516px;width:520px;height:1px;background:#d9d9d9"></div>
<div class="t" style="right:1099.5px;transform-origin:right top;top:510.69px;font-size:11px;color:#595959;transform:scaleX(0.9143);">35</div>
<div style="position:absolute;left:225px;top:878px;width:30px;height:33px;background-color:#5b9bd5;background-image:radial-gradient(#4682bd 0.6px, transparent 0.9px),radial-gradient(#4682bd 0.6px, transparent 0.9px);background-size:5px 5px,5px 5px;background-position:0 0,2px 3px;"></div>
<div style="position:absolute;left:263px;top:866px;width:30px;height:45px;background-color:#ed7d31;"></div>
<div style="position:absolute;left:302px;top:675px;width:30px;height:236px;background-color:#a5a5a5;"></div>
<div style="position:absolute;left:340px;top:675px;width:30px;height:236px;background-color:#ffc000;"></div>
<div style="position:absolute;left:379px;top:765px;width:30px;height:146px;background-color:#4472c4;"></div>
<div style="position:absolute;left:417px;top:765px;width:30px;height:146px;background-color:#70ad47;"></div>
<div style="position:absolute;left:455px;top:562px;width:30px;height:349px;background-color:#255e91;"></div>
<div style="position:absolute;left:494px;top:562px;width:30px;height:349px;background-color:#9e480e;"></div>
<div style="position:absolute;left:532px;top:765px;width:30px;height:146px;background-color:#636363;"></div>
<div style="position:absolute;left:570px;top:765px;width:30px;height:146px;background-color:#997300;"></div>
<div style="position:absolute;left:609px;top:844px;width:30px;height:67px;background-color:#264478;"></div>
<div style="position:absolute;left:647px;top:821px;width:30px;height:90px;background-color:#43682b;"></div>
<div class="t" style="right:819px;transform-origin:right top;top:918.84px;font-size:12px;color:#595959;transform:scaleX(0.7917);">باسر</div>
<div style="position:absolute;left:726px;top:569px;width:164px;height:18px;border:1px solid #b4b4b4;border-radius:4px;background:linear-gradient(#ececec,#d2d2d2)"></div>
<div class="t" style="left:731px;transform-origin:left top;top:572.69px;font-size:11px;color:#333;">المنطقة</div>
<svg style="left:878px;top:576px" width="8" height="5" viewBox="0 0 8 5"><path d="M0 0H8L4 5Z" fill="#333"/></svg>
<div style="position:absolute;left:726px;top:588px;width:164px;height:17px;border:1px solid #b4b4b4;border-radius:4px;background:linear-gradient(#ececec,#d2d2d2)"></div>
<div class="t" style="left:731px;transform-origin:left top;top:590.69px;font-size:11px;color:#333;transform:scaleX(0.9748);">Values</div>
<div style="position:absolute;left:731px;top:614px;width:7px;height:6px;background:#5b9bd5"></div>
<div class="t" style="left:741px;transform-origin:left top;top:610.61px;font-size:10.5px;color:#595959;transform:scaleX(0.9583);unicode-bidi:isolate"><span>إسم التاجر</span> Count of - <span>الخصوص</span></div>
<div style="position:absolute;left:731px;top:636px;width:7px;height:6px;background:#ed7d31"></div>
<div class="t" style="left:741px;transform-origin:left top;top:633.02px;font-size:10.5px;color:#595959;transform:scaleX(0.9922);unicode-bidi:isolate"><span>الزيارة</span> Count of - <span>الخصوص</span></div>
<div style="position:absolute;left:731px;top:659px;width:7px;height:6px;background:#a5a5a5"></div>
<div class="t" style="left:741px;transform-origin:left top;top:655.43px;font-size:10.5px;color:#595959;transform:scaleX(0.9713);unicode-bidi:isolate"><span>إسم التاجر</span> Count of - <span>المطريه</span></div>
<div style="position:absolute;left:731px;top:681px;width:7px;height:6px;background:#ffc000"></div>
<div class="t" style="left:741px;transform-origin:left top;top:677.84px;font-size:10.5px;color:#595959;transform:scaleX(1.0175);unicode-bidi:isolate"><span>الزيارة</span> Count of - <span>المطريه</span></div>
<div style="position:absolute;left:731px;top:704px;width:7px;height:6px;background:#4472c4"></div>
<div class="t" style="left:741px;transform-origin:left top;top:700.25px;font-size:10.5px;color:#595959;transform:scaleX(0.9337);unicode-bidi:isolate"><span>إسم التاجر</span> Count of - <span>عزبه النخل</span></div>
<div style="position:absolute;left:731px;top:726px;width:7px;height:6px;background:#70ad47"></div>
<div class="t" style="left:741px;transform-origin:left top;top:722.66px;font-size:10.5px;color:#595959;transform:scaleX(0.9702);unicode-bidi:isolate"><span>الزيارة</span> Count of - <span>عزبه النخل</span></div>
<div style="position:absolute;left:731px;top:748px;width:7px;height:6px;background:#255e91"></div>
<div class="t" style="left:741px;transform-origin:left top;top:745.07px;font-size:10.5px;color:#595959;transform:scaleX(0.8938);unicode-bidi:isolate"><span>إسم التاجر</span> Count of - <span>عين شمس</span></div>
<div style="position:absolute;left:731px;top:771px;width:7px;height:6px;background:#9e480e"></div>
<div class="t" style="left:741px;transform-origin:left top;top:767.48px;font-size:10.5px;color:#595959;transform:scaleX(0.9245);unicode-bidi:isolate"><span>الزيارة</span> Count of - <span>عين شمس</span></div>
<div style="position:absolute;left:731px;top:793px;width:7px;height:6px;background:#636363"></div>
<div class="t" style="left:741px;transform-origin:left top;top:789.89px;font-size:10.5px;color:#595959;transform:scaleX(0.9050);unicode-bidi:isolate"><span>إسم التاجر</span> Count of - <span>مدينه السلام</span></div>
<div style="position:absolute;left:731px;top:816px;width:7px;height:6px;background:#997300"></div>
<div class="t" style="left:741px;transform-origin:left top;top:812.30px;font-size:10.5px;color:#595959;transform:scaleX(0.9284);unicode-bidi:isolate"><span>الزيارة</span> Count of - <span>مدينه السلام</span></div>
<div style="position:absolute;left:731px;top:838px;width:7px;height:6px;background:#264478"></div>
<div class="t" style="left:741px;transform-origin:left top;top:834.71px;font-size:10.5px;color:#595959;transform:scaleX(0.9243);unicode-bidi:isolate"><span>إسم التاجر</span> Count of - <span>نهضه السلام</span></div>
<div style="position:absolute;left:731px;top:861px;width:7px;height:6px;background:#43682b"></div>
<div class="t" style="left:741px;transform-origin:left top;top:857.12px;font-size:10.5px;color:#595959;transform:scaleX(0.9429);unicode-bidi:isolate"><span>الزيارة</span> Count of - <span>نهضه السلام</span></div>
<div style="position:absolute;left:0px;top:934px;width:1280px;height:28px;background:#f3f3f3"></div>
<div style="position:absolute;left:0px;top:934px;width:165px;height:1px;background:#b9b9b9"></div>
<div style="position:absolute;left:231px;top:934px;width:1049px;height:1px;background:#b9b9b9"></div>
<svg style="left:27px;top:944px" width="5" height="8" viewBox="0 0 5 8"><path d="M5 0V8L0 4Z" fill="#bdbdbd"/></svg>
<svg style="left:56px;top:944px" width="5" height="8" viewBox="0 0 5 8"><path d="M0 0V8L5 4Z" fill="#bdbdbd"/></svg>
<div style="position:absolute;left:100px;top:938px;width:1px;height:19px;background:#c6c6c6"></div>
<div class="t" style="left:113px;transform-origin:left top;top:940.15px;font-size:14px;color:#444;transform:scaleX(0.8789);">Sheet5</div>
<div style="position:absolute;left:165px;top:934px;width:66px;height:24px;background:#fff;border-left:1px solid #b9b9b9;border-right:1px solid #b9b9b9"></div>
<div style="position:absolute;left:165px;top:957px;width:66px;height:2px;background:#217346"></div>
<div class="t" style="left:177px;transform-origin:left top;top:940.15px;font-size:14px;color:#217346;transform:scaleX(0.8710);font-weight:bold">Sheet1</div>
<div class="t" style="right:884px;transform-origin:right top;top:940.15px;font-size:14px;color:#444;transform:scaleX(0.8783);">عملاء -المركز المصرى الحديث</div>
<div style="position:absolute;left:408px;top:938px;width:1px;height:19px;background:#c6c6c6"></div>
<svg style="left:441px;top:939px" width="18" height="18" viewBox="0 0 18 18"><circle cx="9" cy="9" r="8" fill="none" stroke="#777" stroke-width="1.3"/><path d="M9 4.5V13.5M4.5 9H13.5" stroke="#777" stroke-width="1.6"/></svg>
<div style="position:absolute;left:768px;top:943px;width:2px;height:2px;background:#999"></div>
<div style="position:absolute;left:768px;top:947px;width:2px;height:2px;background:#999"></div>
<div style="position:absolute;left:768px;top:951px;width:2px;height:2px;background:#999"></div>
<div style="position:absolute;left:785px;top:941px;width:459px;height:15px;background:#e6e6e6"></div>
<div style="position:absolute;left:785px;top:941px;width:15px;height:15px;background:#fff;border:1px solid #ababab"></div>
<svg style="left:790px;top:945px" width="4" height="7" viewBox="0 0 4 7"><path d="M4 0V7L0 3.5Z" fill="#666"/></svg>
<div style="position:absolute;left:800px;top:941px;width:153px;height:15px;background:#fff;border:1px solid #ababab"></div>
<div style="position:absolute;left:1244px;top:941px;width:15px;height:15px;background:#fff;border:1px solid #ababab"></div>
<svg style="left:1250px;top:945px" width="4" height="7" viewBox="0 0 4 7"><path d="M0 0V7L4 3.5Z" fill="#666"/></svg>
<div style="position:absolute;left:0px;top:962px;width:1280px;height:22px;background:#217346"></div>
<div class="t" style="left:8px;transform-origin:left top;top:966.84px;font-size:12px;color:#fff;transform:scaleX(0.7740);">READY</div>
<svg style="left:60px;top:966px" width="14" height="16" viewBox="0 0 14 16"><path d="M5.5 1.5H13.5V14.5H1.5V6.5" fill="none" stroke="#fff"/><path d="M6 3H13" stroke="#fff" stroke-width="1.2"/><circle cx="4" cy="3.5" r="3" fill="#e6e6e6"/><path d="M3 8.5H5M6 8.5H8M9 8.5H11M3 10.5H5M6 10.5H8M9 10.5H11M3 12.5H5M6 12.5H8M9 12.5H11" stroke="#fff" stroke-width="1"/></svg>
<div class="t" style="left:711px;transform-origin:left top;top:966.84px;font-size:12px;color:#fff;transform:scaleX(0.8739);">AVERAGE: 25.28571429</div>
<div class="t" style="left:844px;transform-origin:left top;top:966.84px;font-size:12px;color:#fff;transform:scaleX(0.8964);">COUNT: 43</div>
<div class="t" style="left:916px;transform-origin:left top;top:966.84px;font-size:12px;color:#fff;transform:scaleX(0.8808);">SUM: 708</div>
<div style="position:absolute;left:988px;top:962px;width:38px;height:22px;background:#19613a"></div>
<svg style="left:1000px;top:966px" width="14" height="13" viewBox="0 0 14 13"><path d="M0.5 0.5H13.5V12.5H0.5ZM0.5 4.5H13.5M0.5 8.5H13.5M4.5 0.5V12.5M9.5 0.5V12.5" fill="none" stroke="#fff"/></svg>
<svg style="left:1038px;top:966px" width="15" height="14" viewBox="0 0 15 14"><rect x="0.5" y="0.5" width="14" height="13" fill="none" stroke="#fff"/><rect x="3.5" y="3.5" width="8" height="7" fill="none" stroke="#fff"/><path d="M5 5.5H10M5 7.5H10" stroke="#fff"/></svg>
<svg style="left:1076px;top:966px" width="15" height="14" viewBox="0 0 15 14"><rect x="0.5" y="0.5" width="14" height="13" fill="none" stroke="#fff"/><rect x="4" y="1" width="3" height="6" fill="#fff"/><path d="M8.5 0.5V7.5H14.5" fill="none" stroke="#fff"/></svg>
<div style="position:absolute;left:1107px;top:972px;width:6px;height:2px;background:#fff"></div>
<div style="position:absolute;left:1117px;top:972px;width:100px;height:1px;background:#fff"></div>
<div style="position:absolute;left:1165px;top:967px;width:4px;height:11px;background:#fff"></div>
<div style="position:absolute;left:1221px;top:972px;width:8px;height:2px;background:#fff"></div>
<div style="position:absolute;left:1224px;top:969px;width:2px;height:8px;background:#fff"></div>
<div class="t" style="left:1245px;transform-origin:left top;top:966.84px;font-size:12px;color:#fff;transform:scaleX(0.8794);">100%</div>
<div style="position:absolute;left:0px;top:984px;width:1280px;height:40px;background:#d6d6d6"></div>
<svg style="left:16px;top:996px" width="16" height="16" viewBox="0 0 16 16"><path d="M0 2L6.3 1.1V7.4H0ZM7.3 1L16 0V7.4H7.3ZM0 8.4H6.3V14.9L0 14ZM7.3 8.4H16V16L7.3 15Z" fill="#000"/></svg>
<div style="position:absolute;left:49px;top:985px;width:287px;height:38px;background:#fff"></div>
<svg style="left:60px;top:995px" width="18" height="18" viewBox="0 0 18 18"><circle cx="11" cy="7" r="6" fill="none" stroke="#222" stroke-width="1.5"/><path d="M6.8 11.2L1 17" stroke="#222" stroke-width="1.8"/></svg>
<div class="t" style="left:88px;transform-origin:left top;top:997.30px;font-size:15px;color:#222;transform:scaleX(0.9481);">Quick search</div>
<svg style="left:258px;top:985px" width="78" height="38" viewBox="0 0 78 38"><path d="M1 38V24Q1 12 8 7Q14 2 20 4L30 7Q40 2 55 2Q68 3 78 7V38Z" fill="#2e8b57"/><path d="M1 32Q2 14 10 6Q15 2 20 4Q30 8 38 14Q44 20 46 26Q30 22 20 26Q10 30 1 38Z" fill="#8cc86a"/><path d="M10 30Q18 20 24 22Q30 24 34 30L20 36Z" fill="#a8d27a"/><path d="M26 7Q36 3 52 3Q66 3 78 6V9Q60 8 50 10Q42 12 38 13Z" fill="#3f6fb0"/><path d="M38 13Q46 9 60 9Q70 9 78 10V19Q60 17 54 18Q50 19 46 22Z" fill="#a8d27a"/><path d="M78 18H55Q48 18 46 22Q44 26 40 28Q36 30 40 31Q50 31 55 24Q56 20 54 18" fill="none" stroke="#e2e2e2" stroke-width="2.6"/><path d="M30 38L36 31M35 38L40 31M40 38L44 31M46 38L48 32M68 38L60 25M74 38L64 23" stroke="#7cc04a" stroke-width="1.5"/></svg>
<svg style="left:351px;top:996px" width="18" height="16" viewBox="0 0 18 16"><path d="M1 0.75H11M1 15.25H11" stroke="#111" stroke-width="1.5"/><rect x="1.75" y="4" width="8.5" height="8" fill="none" stroke="#111" stroke-width="1.5"/><rect x="14" y="4.5" width="3" height="3" fill="#111"/><path d="M15.5 0V3M15.5 9V16" stroke="#111" stroke-width="1.5"/></svg>
<svg style="left:393px;top:993px" width="25" height="22" viewBox="0 0 25 22"><defs><linearGradient id="cpl" x1="0" y1="0" x2="0" y2="1"><stop offset="0" stop-color="#3b8ee8"/><stop offset="0.5" stop-color="#4cc06a"/><stop offset="1" stop-color="#f7b32b"/></linearGradient><linearGradient id="cpr" x1="0" y1="0" x2="0" y2="1"><stop offset="0" stop-color="#8b5cf0"/><stop offset="0.6" stop-color="#e0609a"/><stop offset="1" stop-color="#f2844a"/></linearGradient></defs><path d="M8 1H15Q18 1 17 5L12 19Q11 21 8 21H4Q0 21 1 17L5 4Q6 1 8 1Z" fill="url(#cpl)"/><path d="M13 6H21Q25 6 24 10L20 19Q19 21 16 21H10Z" fill="url(#cpr)"/></svg>
<svg style="left:432px;top:1002px" width="22" height="11" viewBox="0 0 22 11"><path d="M3 0H19L22 5V10H0V5Z" fill="#bdbdbd"/><path d="M3 0H19L21 4H1Z" fill="#e8e8e8"/><rect x="0" y="5" width="22" height="5" fill="#9a9a9a"/><rect x="17" y="6.5" width="3" height="2" fill="#4caf50"/></svg>
<div style="position:absolute;left:429px;top:1021px;width:29px;height:3px;background:#0f6cbd"></div>
<svg style="left:472px;top:995px" width="14" height="20" viewBox="0 0 14 20"><rect x="0" y="0" width="14" height="20" fill="#f0d08a"/><path d="M2 3V16" stroke="#fff" stroke-dasharray="1 2"/></svg>
<div style="position:absolute;left:466px;top:1021px;width:29px;height:3px;background:#0f6cbd"></div>
<svg style="left:505px;top:992px" width="26" height="25" viewBox="0 0 26 25"><path d="M1 7Q7 4 13 8Q19 4 25 7V21Q19 18 13 22Q7 18 1 21Z" fill="#f2f2f2" stroke="#222" stroke-width="1.8"/><path d="M13 8V22M4 10L10 11M4 14L10 15M16 11L22 10M16 15L22 14" stroke="#444"/><path d="M2 24L24 2M11 3L25 14" stroke="#e81123" stroke-width="2.4"/></svg>
<svg style="left:544px;top:992px" width="24" height="24" viewBox="0 0 24 24"><path d="M7 5V2Q7 0.5 8.5 0.5H15.5Q17 0.5 17 2V5" fill="none" stroke="#3a7bd5" stroke-width="1.5"/><rect x="0.5" y="4" width="23" height="20" rx="2.5" fill="#1f5aa6"/><rect x="7.5" y="9" width="4" height="4" fill="#f25022"/><rect x="12.5" y="9" width="4" height="4" fill="#7fba00"/><rect x="7.5" y="14" width="4" height="4" fill="#00a4ef"/><rect x="12.5" y="14" width="4" height="4" fill="#ffb900"/></svg>
<svg style="left:581px;top:993px" width="25" height="23" viewBox="0 0 25 23"><path d="M9 4L18 0L25 5V17H9Z" fill="#2b87d8"/><path d="M9 9L25 5V17Q25 22 21 22H9Z" fill="#5fb0ec"/><path d="M9 9L25 17H9Z" fill="#1f6fc0"/><rect x="0" y="6" width="13" height="13" rx="1.5" fill="#0f6cbd"/><ellipse cx="6.5" cy="12.5" rx="3.2" ry="3.6" fill="none" stroke="#fff" stroke-width="1.8"/></svg>
<svg style="left:619px;top:993px" width="23" height="23" viewBox="0 0 23 23"><circle cx="11.5" cy="11.5" r="11" fill="#f2f2f2" stroke="#999" stroke-width="0.8"/><path d="M9 3L13 4L14 8L10 9L7 6Z" fill="#111"/><path d="M1.5 10L5 11L5 15L2.5 16Q0.5 13 1.5 10Z" fill="#111"/><path d="M17 11L21 10Q22.5 13 21 16L17 15Z" fill="#111"/><path d="M9 18L13 18L14 21.5Q11 22.5 8 21.5Z" fill="#111"/></svg>
<svg style="left:655px;top:993px" width="25" height="24" viewBox="0 0 25 24"><defs><linearGradient id="edg" x1="0" y1="0" x2="1" y2="1"><stop offset="0" stop-color="#35c1f1"/><stop offset="0.55" stop-color="#1a7fd6"/><stop offset="1" stop-color="#0c59a4"/></linearGradient></defs><circle cx="12.5" cy="12" r="11.5" fill="url(#edg)"/><path d="M13 4Q22 4 24 12Q24 16 20 16H13Q10 16 11 13Q13 9 18 10" fill="#5fbf6e"/><path d="M3 8Q2 18 10 23Q14 24 18 22Q9 22 8 15Q8 11 13 10" fill="#0f5db8"/></svg>
<div style="position:absolute;left:653px;top:1021px;width:28px;height:3px;background:#0f6cbd"></div>
<svg style="left:692px;top:993px" width="24" height="24" viewBox="0 0 24 24"><circle cx="12" cy="12" r="11.5" fill="#db4437"/><path d="M12 12L2 6.25A11.5 11.5 0 0 0 12 23.5Z" fill="#0f9d58"/><path d="M12 12L12 23.5A11.5 11.5 0 0 0 22 6.25Z" fill="#ffcd40"/><circle cx="12" cy="12" r="5.3" fill="#fff"/><circle cx="12" cy="12" r="4.2" fill="#4285f4"/></svg>
<svg style="left:729px;top:993px" width="24" height="24" viewBox="0 0 24 24"><defs><radialGradient id="ffx" cx="0.3" cy="0.8" r="1"><stop offset="0" stop-color="#ff3750"/><stop offset="0.6" stop-color="#ff7139"/><stop offset="1" stop-color="#ffbd4f"/></radialGradient></defs><path d="M12 23.5A11 11 0 0 1 1 12.5Q1 6 5 3Q5 6 7 7Q9 2 15 1Q13 4 16 6Q23 8 23 14A11 10 0 0 1 12 23.5Z" fill="url(#ffx)"/><circle cx="12.5" cy="13.5" r="6" fill="#8257e6"/><path d="M7 12Q9 8 14 9Q10 11 12 14Q9 15 7 12Z" fill="#ff8a3d"/></svg>
<div style="position:absolute;left:760px;top:984px;width:36px;height:40px;background:#ebebeb"></div>
<div style="position:absolute;left:760px;top:1021px;width:36px;height:3px;background:#0f6cbd"></div>
<svg style="left:765px;top:993px" width="26" height="24" viewBox="0 0 26 24"><rect x="9" y="2" width="16" height="20" fill="#fff" stroke="#1e7145"/><path d="M10 6H24M10 10H24M10 14H24M10 18H24M16 2V22" stroke="#1e7145" stroke-width="0.8"/><path d="M0 3L14 1V23L0 21Z" fill="#1e7145"/><path d="M3.5 7L9.5 17M9.5 7L3.5 17" stroke="#fff" stroke-width="2"/></svg>
<svg style="left:803px;top:993px" width="26" height="24" viewBox="0 0 26 24"><rect x="9" y="2" width="16" height="20" fill="#fff" stroke="#d24726"/><circle cx="18" cy="9" r="4" fill="none" stroke="#d24726" stroke-width="1.5"/><path d="M12 16H24M12 19H24" stroke="#d24726"/><path d="M0 3L14 1V23L0 21Z" fill="#d24726"/><text x="3" y="17" font-size="12" font-weight="bold" fill="#fff" font-family="Liberation Sans">P</text></svg>
<svg style="left:840px;top:993px" width="30" height="28" viewBox="0 0 30 28"><circle cx="12" cy="12" r="10.5" fill="none" stroke="#25a366" stroke-width="2.2"/><path d="M2 23L4 17" stroke="#25a366" stroke-width="2.2"/><path d="M8 7Q7 10 10 14Q13 17 16 16" fill="none" stroke="#25a366" stroke-width="2.2"/></svg>
<svg style="left:848px;top:1003px" width="22" height="19" viewBox="0 0 22 19"><ellipse cx="11" cy="9.5" rx="10" ry="8.5" fill="#d8d8d8" stroke="#333" stroke-width="1"/></svg>
<div class="t" style="left:851px;transform-origin:left top;top:1007.84px;font-size:12px;color:#111;transform:scaleX(1.1977);">30</div>
<svg style="left:877px;top:993px" width="25" height="24" viewBox="0 0 25 24"><rect x="9" y="2" width="16" height="20" fill="#fff" stroke="#2b579a"/><path d="M12 6H24M12 10H24M12 14H24M12 18H24" stroke="#2b579a"/><path d="M0 3L14 1V23L0 21Z" fill="#2b579a"/><text x="1.5" y="16" font-size="11" font-weight="bold" fill="#fff" font-family="Liberation Sans">W</text></svg>
<div style="position:absolute;left:911px;top:984px;width:17px;height:40px;background:#ebebeb"></div>
<svg style="left:914px;top:990px" width="10" height="7" viewBox="0 0 10 7"><path d="M1 6L5 1.5L9 6" fill="none" stroke="#444" stroke-width="1.6"/></svg>
<svg style="left:914px;top:1012px" width="10" height="7" viewBox="0 0 10 7"><path d="M1 1L5 5.5L9 1" fill="none" stroke="#444" stroke-width="1.6"/></svg>
<svg style="left:952px;top:993px" width="17" height="23" viewBox="0 0 17 23"><path d="M4 4Q1 7 1.5 10Q2 13 4.5 13Q7.5 13 7.5 9.5Q7 6 4 4Z" fill="#ff6a1a"/><path d="M4.5 8Q3 10 4.5 12Q6 10 4.5 8Z" fill="#ffc04d"/><rect x="9.5" y="1" width="5" height="16" rx="2.5" fill="#f4f8ff" stroke="#8ab4e8"/><rect x="11" y="8" width="2" height="10" fill="#e81123"/><circle cx="12" cy="19" r="3.2" fill="#e81123" stroke="#8ab4e8" stroke-width="0.8"/></svg>
<div class="t" style="right:269px;transform-origin:right top;top:996.15px;font-size:14px;color:#222;transform:scaleX(0.8364);direction:rtl">طق...</div>
<svg style="left:1035px;top:995px" width="17" height="18" viewBox="0 0 17 18"><path d="M3 1H14L16 3V17H5L1 15V3Z" fill="#fff" stroke="#111" stroke-width="1.6"/><path d="M1 3H14V17" fill="none" stroke="#111" stroke-width="1.2"/><text x="3.5" y="14.5" font-size="11" font-weight="bold" fill="#111" font-family="Liberation Serif">N</text></svg>
<svg style="left:1061px;top:995px" width="12" height="18" viewBox="0 0 12 18"><path d="M2 3Q6 0 10 3M2 15Q6 18 10 15" fill="none" stroke="#222" stroke-width="1"/><rect x="1" y="5" width="7" height="8" rx="2" fill="none" stroke="#222" stroke-width="1.3"/><path d="M8 7.5L11 6V12L8 10.5" fill="none" stroke="#222" stroke-width="1.2"/></svg>
<svg style="left:1083px;top:997px" width="17" height="15" viewBox="0 0 17 15"><rect x="3.5" y="1.5" width="13" height="9" fill="none" stroke="#222" stroke-width="1.2"/><rect x="0.5" y="0.5" width="4" height="3" fill="#d6d6d6" stroke="#222"/><path d="M10 11V14M6 14.5H14M2 4V14" stroke="#222" stroke-width="1.2"/></svg>
<svg style="left:1106px;top:997px" width="18" height="14" viewBox="0 0 18 14"><path d="M1 4.5H4L8 1V13L4 9.5H1Z" fill="none" stroke="#222" stroke-width="1.2"/><path d="M10.5 4.5Q12 7 10.5 9.5M13 3Q15 7 13 11" fill="none" stroke="#222" stroke-width="1"/><path d="M15.5 1.5Q18.5 7 15.5 12.5" fill="none" stroke="#999" stroke-width="1"/></svg>
<div class="t" style="left:1141px;transform-origin:left top;top:999.84px;font-size:12px;color:#222;">ع</div>
<div class="t" style="left:1175px;transform-origin:left top;top:988.00px;font-size:13px;color:#222;transform:scaleX(0.8467);">1:53 PM</div>
<div class="t" style="left:1172px;transform-origin:left top;top:1006.00px;font-size:13px;color:#222;transform:scaleX(0.8892);">9/1/2025</div>
<svg style="left:1239px;top:996px" width="17" height="15" viewBox="0 0 17 15"><path d="M0 0H16V12H6L3 15V12H0Z" fill="#111"/><path d="M3 3.5H13M3 6.5H13M3 9.5H9" stroke="#fff" stroke-width="1.2"/></svg>
<svg style="left:1245px;top:1003px" width="17" height="17" viewBox="0 0 17 17"><circle cx="8.5" cy="8.5" r="7.8" fill="#d6d6d6" stroke="#666" stroke-width="0.8"/></svg>
<div class="t" style="left:1250px;transform-origin:left top;top:1005.84px;font-size:12px;color:#111;transform:scaleX(1.0467);">8</div>
<div style="position:absolute;left:1275px;top:984px;width:1px;height:40px;background:#b8b8b8"></div>
<svg style="left:555px;top:925px" width="170" height="80" viewBox="0 0 170 80"><g fill="none" stroke="rgba(200,200,200,0.46)" stroke-width="7" stroke-linecap="round"><path d="M33 9V38Q33 45 26 45H20Q10 45 10 36Q10 28 20 25"/><path d="M33 44H140"/><circle cx="59" cy="32" r="10"/><path d="M86 27V38M101 27V38M112 27V38M124 27V38"/><circle cx="147" cy="37" r="10.5"/></g><g fill="rgba(200,200,200,0.46)"><circle cx="53" cy="13" r="4"/><circle cx="65" cy="13" r="4"/><circle cx="81" cy="21" r="4"/><circle cx="92" cy="21" r="4"/></g></svg>
<div class="t" style="left:563px;transform-origin:left top;top:980.07px;font-size:20px;color:rgba(200,200,200,0.35);transform:scaleX(1.2484);font-weight:bold">mostaql.com</div></body></html>
